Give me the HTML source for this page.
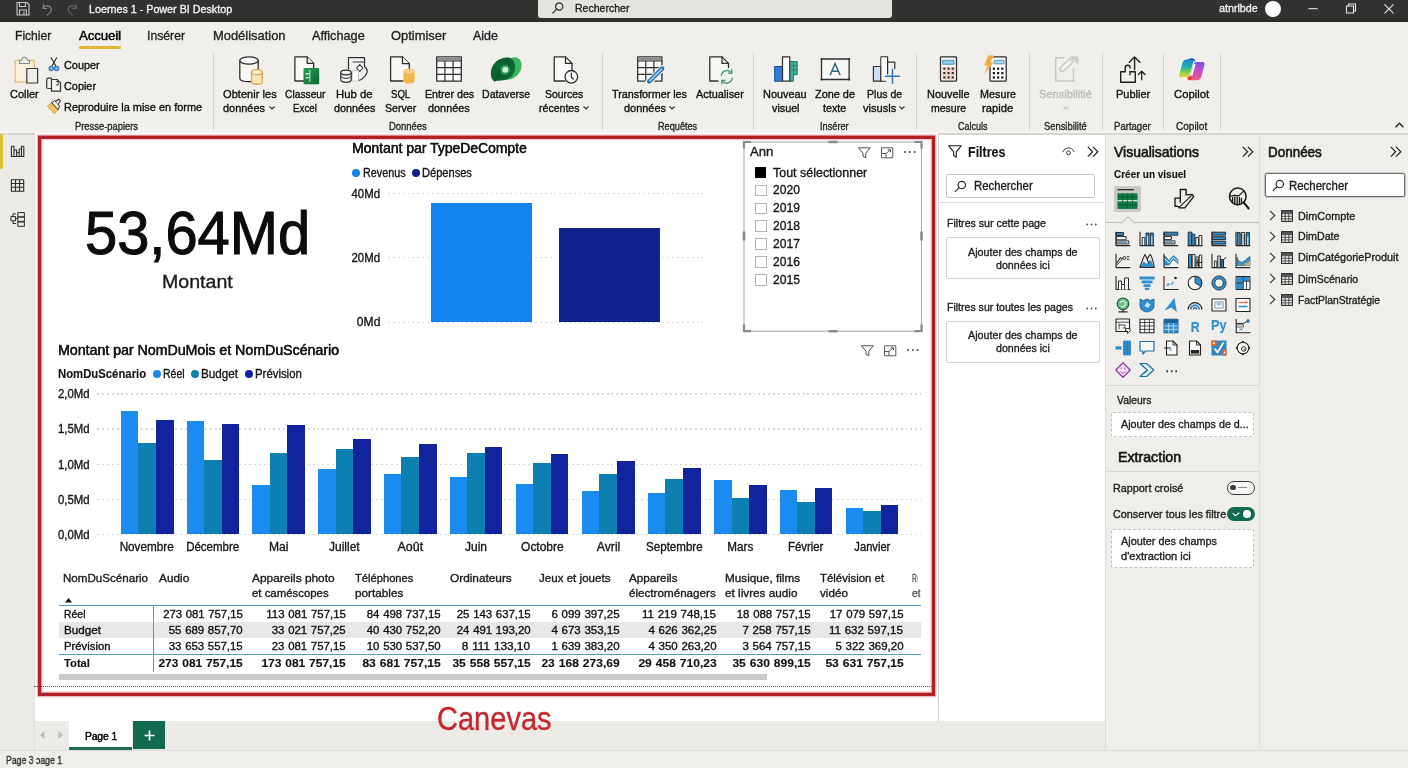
<!DOCTYPE html>
<html lang="fr">
<head>
<meta charset="utf-8">
<title>Loernes 1 - Power BI Desktop</title>
<style>
html,body{margin:0;padding:0}
body{width:1408px;height:768px;position:relative;overflow:hidden;background:#efeeea;font-family:"Liberation Sans",sans-serif;color:#1b1b1b;font-size:12px}
.a{position:absolute;white-space:nowrap;line-height:1;-webkit-text-stroke:0.34px}
.c{text-align:center}
.r{text-align:right}
.n{transform-origin:0 0;display:inline-block}
svg{position:absolute;overflow:visible}
</style>
</head>
<body>
<div id="root" style="position:absolute;left:0;top:0;width:1408px;height:768px;will-change:transform">
<!-- title bar -->
<div class="a" style="left:0;top:0;width:1408px;height:22px;background:linear-gradient(#333230 0,#333230 80%,#2b2a28 100%)"></div>
<svg style="left:14.300px;top:1.200px" width="63" height="16" viewBox="0 0 60 16" fill="none" stroke="#c8c8c6" stroke-width="1.1">
<path d="M1.5 1.5h10l2 2v10.500h-12z M4 1.500v4h6v-4 M4 14v-5h7v5 M8.500 10.500v3"/>
<path d="M28.500 3l-1.200 4.200 4.200 0.300 M27.600 7c2-2.500 5.500-2.700 7.300-0.800 1.800 2 1 5-3.400 8" stroke="#8a8a88"/>
<path d="M60 3l1.200 4.200-4.200 0.300 M60.900 7c-2-2.500-5.500-2.700-7.300-0.800-1.800 2-1 5 3.400 8" stroke="#6a6967"/>
</svg>
<div class="a" style="left:537.500px;top:0;width:354.500px;height:18px;background:#e3e2df;border-radius:0 0 3px 3px"></div>
<svg style="left:551px;top:1px" width="14" height="14" viewBox="0 0 14 14" fill="none" stroke="#2b2b2b" stroke-width="1.200"><circle cx="8.200" cy="5.500" r="3.600"/><path d="M5.600 8.200L1.500 12.300"/></svg>
<div class="a" style="left:1265px;top:0.700px;width:16px;height:16px;border-radius:8px;background:#fff"></div>
<svg style="left:1305px;top:0px" width="100" height="18" viewBox="0 0 100 18" fill="none" stroke="#e6e6e4" stroke-width="1.100">
<path d="M3.500 8.700h9.200"/>
<path d="M41.500 6h7v7h-7z M43.500 6v-2h7v7h-2" />
<path d="M79.500 4.300l9 9 M88.500 4.300l-9 9"/>
</svg>
<!-- tabs + ribbon background -->
<div class="a" style="left:0;top:22px;width:1408px;height:111px;background:#f0efeb"></div>
<div class="a" style="left:0;top:128.500px;width:1408px;height:4.500px;background:linear-gradient(#f0efeb,#f6f5f2)"></div>
<div class="a" style="left:0;top:133px;width:1408px;height:1.500px;background:#d6d5d1"></div>
<div class="a" style="left:79px;top:45.700px;width:42px;height:3px;background:#e2b93b;border-radius:1px"></div>
<!-- top text -->
<div class="a" style="left:89.3px;top:4px;font-size:11.4px;transform:scaleX(0.9418);transform-origin:0 0;color:#f4f4f2;">Loernes 1 - Power BI Desktop</div>
<div class="a" style="left:575px;top:3px;font-size:11.5px;transform:scaleX(0.9168);transform-origin:0 0;color:#222;">Rechercher</div>
<div class="a" style="left:1218.5px;top:3px;font-size:11px;transform:scaleX(0.9736);transform-origin:0 0;color:#f0f0ee;">atnrlbde</div>
<div class="a" style="left:15px;top:29px;font-size:13px;transform:scaleX(0.9305);transform-origin:0 0;color:#1f1f1f;">Fichier</div>
<div class="a" style="left:79px;top:29px;font-size:13px;transform:scaleX(1.0021);transform-origin:0 0;color:#111;text-shadow:0.35px 0 0 #111;">Accueil</div>
<div class="a" style="left:147px;top:29px;font-size:13px;transform:scaleX(0.9391);transform-origin:0 0;color:#1f1f1f;">Insérer</div>
<div class="a" style="left:212.5px;top:29px;font-size:13px;transform:scaleX(0.9933);transform-origin:0 0;color:#1f1f1f;">Modélisation</div>
<div class="a" style="left:311.8px;top:29px;font-size:13px;transform:scaleX(0.9765);transform-origin:0 0;color:#1f1f1f;">Affichage</div>
<div class="a" style="left:391.2px;top:29px;font-size:13px;transform:scaleX(0.9924);transform-origin:0 0;color:#1f1f1f;">Optimiser</div>
<div class="a" style="left:473px;top:29px;font-size:13px;transform:scaleX(0.9607);transform-origin:0 0;color:#1f1f1f;">Aide</div>
<div class="a" style="left:10px;top:89px;font-size:11.5px;transform:scaleX(0.9555);transform-origin:0 0;color:#0f0f0f;">Coller</div>
<div class="a" style="left:63.8px;top:60px;font-size:11.5px;transform:scaleX(0.9464);transform-origin:0 0;color:#0f0f0f;">Couper</div>
<div class="a" style="left:63.8px;top:81px;font-size:11.5px;transform:scaleX(0.9445);transform-origin:0 0;color:#0f0f0f;">Copier</div>
<div class="a" style="left:63.8px;top:102px;font-size:11.5px;transform:scaleX(0.9524);transform-origin:0 0;color:#0f0f0f;">Reproduire la mise en forme</div>
<div class="a" style="left:222.5px;top:89px;font-size:11.5px;transform:scaleX(0.9656);transform-origin:0 0;color:#0f0f0f;">Obtenir les</div>
<div class="a" style="left:223.3px;top:103px;font-size:11.5px;transform:scaleX(0.9518);transform-origin:0 0;color:#0f0f0f;">données</div>
<svg style="left:269px;top:106px" width="6" height="4" viewBox="0 0 6 4" fill="none" stroke="#333" stroke-width="1.2"><path d="M0.5 0.5L3 3L5.5 0.5"/></svg>
<div class="a" style="left:284.5px;top:89px;font-size:11.5px;transform:scaleX(0.8925);transform-origin:0 0;color:#0f0f0f;">Classeur</div>
<div class="a" style="left:293px;top:103px;font-size:11.5px;transform:scaleX(0.8535);transform-origin:0 0;color:#0f0f0f;">Excel</div>
<div class="a" style="left:336px;top:89px;font-size:11.5px;transform:scaleX(0.9842);transform-origin:0 0;color:#0f0f0f;">Hub de</div>
<div class="a" style="left:333.5px;top:103px;font-size:11.5px;transform:scaleX(0.9404);transform-origin:0 0;color:#0f0f0f;">données</div>
<div class="a" style="left:390.8px;top:89px;font-size:11.5px;transform:scaleX(0.8344);transform-origin:0 0;color:#0f0f0f;">SQL</div>
<div class="a" style="left:384.5px;top:103px;font-size:11.5px;transform:scaleX(0.9211);transform-origin:0 0;color:#0f0f0f;">Server</div>
<div class="a" style="left:424.5px;top:89px;font-size:11.5px;transform:scaleX(0.9273);transform-origin:0 0;color:#0f0f0f;">Entrer des</div>
<div class="a" style="left:428.2px;top:103px;font-size:11.5px;transform:scaleX(0.9450);transform-origin:0 0;color:#0f0f0f;">données</div>
<div class="a" style="left:482px;top:89px;font-size:11.5px;transform:scaleX(0.9196);transform-origin:0 0;color:#0f0f0f;">Dataverse</div>
<div class="a" style="left:545px;top:89px;font-size:11.5px;transform:scaleX(0.9054);transform-origin:0 0;color:#0f0f0f;">Sources</div>
<div class="a" style="left:539px;top:103px;font-size:11.5px;transform:scaleX(0.9181);transform-origin:0 0;color:#0f0f0f;">récentes</div>
<svg style="left:582.5px;top:106px" width="6" height="4" viewBox="0 0 6 4" fill="none" stroke="#333" stroke-width="1.2"><path d="M0.5 0.5L3 3L5.5 0.5"/></svg>
<div class="a" style="left:612px;top:89px;font-size:11.5px;transform:scaleX(0.9364);transform-origin:0 0;color:#0f0f0f;">Transformer les</div>
<div class="a" style="left:623.8px;top:103px;font-size:11.5px;transform:scaleX(0.9518);transform-origin:0 0;color:#0f0f0f;">données</div>
<svg style="left:669px;top:106px" width="6" height="4" viewBox="0 0 6 4" fill="none" stroke="#333" stroke-width="1.2"><path d="M0.5 0.5L3 3L5.5 0.5"/></svg>
<div class="a" style="left:695.7px;top:89px;font-size:11.5px;transform:scaleX(0.9466);transform-origin:0 0;color:#0f0f0f;">Actualiser</div>
<div class="a" style="left:763.2px;top:89px;font-size:11.5px;transform:scaleX(0.9492);transform-origin:0 0;color:#0f0f0f;">Nouveau</div>
<div class="a" style="left:771.5px;top:103px;font-size:11.5px;transform:scaleX(0.9353);transform-origin:0 0;color:#0f0f0f;">visuel</div>
<div class="a" style="left:814.8px;top:89px;font-size:11.5px;transform:scaleX(0.9478);transform-origin:0 0;color:#0f0f0f;">Zone de</div>
<div class="a" style="left:823.2px;top:103px;font-size:11.5px;transform:scaleX(0.9305);transform-origin:0 0;color:#0f0f0f;">texte</div>
<div class="a" style="left:867px;top:89px;font-size:11.5px;transform:scaleX(0.9176);transform-origin:0 0;color:#0f0f0f;">Plus de</div>
<div class="a" style="left:863.2px;top:103px;font-size:11.5px;transform:scaleX(0.9622);transform-origin:0 0;color:#0f0f0f;">visusls</div>
<svg style="left:898.5px;top:106px" width="6" height="4" viewBox="0 0 6 4" fill="none" stroke="#333" stroke-width="1.2"><path d="M0.5 0.5L3 3L5.5 0.5"/></svg>
<div class="a" style="left:927px;top:89px;font-size:11.5px;transform:scaleX(0.9497);transform-origin:0 0;color:#0f0f0f;">Nouvelle</div>
<div class="a" style="left:931px;top:103px;font-size:11.5px;transform:scaleX(0.9127);transform-origin:0 0;color:#0f0f0f;">mesure</div>
<div class="a" style="left:979.8px;top:89px;font-size:11.5px;transform:scaleX(0.9387);transform-origin:0 0;color:#0f0f0f;">Mesure</div>
<div class="a" style="left:982.2px;top:103px;font-size:11.5px;transform:scaleX(0.9759);transform-origin:0 0;color:#0f0f0f;">rapide</div>
<div class="a" style="left:1039px;top:89px;font-size:11.5px;transform:scaleX(0.9641);transform-origin:0 0;color:#b9b8b5;">Sensibilitié</div>
<svg style="left:1062.5px;top:106px" width="6" height="4" viewBox="0 0 6 4" fill="none" stroke="#c4c3c0" stroke-width="1.2"><path d="M0.5 0.5L3 3L5.5 0.5"/></svg>
<div class="a" style="left:1115.5px;top:89px;font-size:11.5px;transform:scaleX(0.9553);transform-origin:0 0;color:#0f0f0f;">Publier</div>
<div class="a" style="left:1174px;top:89px;font-size:11.5px;transform:scaleX(0.9833);transform-origin:0 0;color:#0f0f0f;">Copilot</div>
<div class="a" style="left:74.5px;top:121px;font-size:10.8px;transform:scaleX(0.8675);transform-origin:0 0;color:#262626;">Presse-papiers</div>
<div class="a" style="left:388.8px;top:121px;font-size:10.8px;transform:scaleX(0.8721);transform-origin:0 0;color:#262626;">Données</div>
<div class="a" style="left:658.2px;top:121px;font-size:10.8px;transform:scaleX(0.8480);transform-origin:0 0;color:#262626;">Requêtes</div>
<div class="a" style="left:820.2px;top:121px;font-size:10.8px;transform:scaleX(0.8539);transform-origin:0 0;color:#262626;">Insérer</div>
<div class="a" style="left:957.8px;top:121px;font-size:10.8px;transform:scaleX(0.8331);transform-origin:0 0;color:#262626;">Calculs</div>
<div class="a" style="left:1044px;top:121px;font-size:10.8px;transform:scaleX(0.8675);transform-origin:0 0;color:#262626;">Sensibilité</div>
<div class="a" style="left:1114.2px;top:121px;font-size:10.8px;transform:scaleX(0.8861);transform-origin:0 0;color:#262626;">Partager</div>
<div class="a" style="left:1176px;top:121px;font-size:10.8px;transform:scaleX(0.9282);transform-origin:0 0;color:#262626;">Copilot</div>
<div class="a" style="left:213px;top:53px;width:1px;height:77px;background:#d4d3d0;"></div>
<div class="a" style="left:602px;top:53px;width:1px;height:77px;background:#d4d3d0;"></div>
<div class="a" style="left:753px;top:53px;width:1px;height:77px;background:#d4d3d0;"></div>
<div class="a" style="left:916px;top:53px;width:1px;height:77px;background:#d4d3d0;"></div>
<div class="a" style="left:1029px;top:53px;width:1px;height:77px;background:#d4d3d0;"></div>
<div class="a" style="left:1102px;top:53px;width:1px;height:77px;background:#d4d3d0;"></div>
<div class="a" style="left:1163px;top:53px;width:1px;height:77px;background:#d4d3d0;"></div>
<div class="a" style="left:1220px;top:53px;width:1px;height:77px;background:#d4d3d0;"></div>
<svg style="left:1394.5px;top:122px" width="9" height="6" viewBox="0 0 9 6" fill="none" stroke="#222" stroke-width="1.3"><path d="M0.6 5.3L4.5 1.2L8.400 5.3"/></svg>
<!-- ribbon icons -->
<svg style="left:0;top:0" width="1408" height="134" viewBox="0 0 1408 134" fill="none" stroke-linejoin="round" stroke-linecap="round">
<defs>
<linearGradient id="gxl" x1="0" y1="0" x2="1" y2="1"><stop offset="0" stop-color="#2a9a55"/><stop offset="1" stop-color="#0c6a33"/></linearGradient>
<linearGradient id="gcpl" x1="0" y1="0" x2="0" y2="1"><stop offset="0" stop-color="#1b86d8"/><stop offset="0.45" stop-color="#27b3a8"/><stop offset="0.75" stop-color="#8fd440"/><stop offset="1" stop-color="#f3d13a"/></linearGradient>
<linearGradient id="gcpr" x1="0" y1="0" x2="0" y2="1"><stop offset="0" stop-color="#7d4fe0"/><stop offset="0.5" stop-color="#c24fc4"/><stop offset="1" stop-color="#f4568f"/></linearGradient>
<radialGradient id="gdv" cx="0.3" cy="0.4" r="0.8"><stop offset="0" stop-color="#0a6a33"/><stop offset="0.6" stop-color="#0b5b2c"/><stop offset="1" stop-color="#12803f"/></radialGradient>
</defs>
<!-- Coller -->
<path d="M19.5 60.500H15.200V82h10.500" stroke="#e3bf7c" stroke-width="1.400" fill="none"/>
<path d="M15.900 61.200H33.500V67.500H26.500V81.300H15.900z" fill="#f8efdc"/>
<path d="M29.500 60.500H34.200V67.500" stroke="#e3bf7c" stroke-width="1.400"/>
<path d="M19.500 63.500V60.300H21.800C21.800 56.300 27.200 56.300 27.200 60.300H29.500V63.500z" fill="#f0efeb" stroke="#8a8a8a" stroke-width="1.100"/>
<rect x="26.800" y="68.500" width="10.800" height="14.500" fill="#eeeeec" stroke="#3a3a3a" stroke-width="1.200"/>
<!-- Couper -->
<path d="M51.200 57.800L56 66.500M56.600 57.800L51.800 66.500" stroke="#333" stroke-width="1.200"/>
<circle cx="51.200" cy="68.500" r="2" stroke="#3f7fc4" stroke-width="1.500" fill="#9cc0e8"/>
<circle cx="56.600" cy="68.500" r="2" stroke="#3f7fc4" stroke-width="1.500" fill="#9cc0e8"/>
<!-- Copier -->
<path d="M50.500 88.500H48.200Q46.700 88.500 46.700 87V79.700Q46.700 78.200 48.200 78.200H51.500" stroke="#333" stroke-width="1.200"/>
<path d="M51.500 91.200V79.500H57.200L60.500 82.800V91.200z" fill="#f6f5f3" stroke="#333" stroke-width="1.200"/>
<path d="M56.200 81.500h2v3.500h-2" stroke="#333" stroke-width="0.900"/>
<!-- Reproduire -->
<path d="M47.500 106L52 102.500L58.200 109.500L54.500 113.500z" fill="#f2c45f" stroke="#d9a033" stroke-width="0.900"/>
<path d="M52 102.500L54.800 100.500L59.500 106.200L58.200 109.500z" fill="#f6f5f3" stroke="#333" stroke-width="1"/>
<path d="M55.500 101.500L58.800 99.200L60.300 100.800L58.200 104.200" stroke="#333" stroke-width="1.100" fill="#f6f5f3"/>
<!-- Obtenir les données -->
<path d="M239.800 60.500V78.200C239.800 82.800 258.200 82.800 258.200 78.200V60.500" fill="#f8f8f6" stroke="#2f2f2f" stroke-width="1.300"/>
<ellipse cx="249" cy="60.500" rx="9.200" ry="3.700" fill="#f8f8f6" stroke="#2f2f2f" stroke-width="1.300"/>
<path d="M251.500 72.200V82C251.500 85 262.300 85 262.300 82V72.200" fill="#fbe4b3" stroke="#dba858" stroke-width="1.300"/>
<ellipse cx="256.900" cy="72.200" rx="5.400" ry="2.500" fill="#fdeecb" stroke="#dba858" stroke-width="1.300"/>
<!-- Classeur Excel -->
<path d="M294.900 56.900H307.200L313.600 63.300V81H294.900z" fill="#f8f8f6" stroke="#2f2f2f" stroke-width="1.300"/>
<path d="M307.200 56.900V63.300H313.600" stroke="#2f2f2f" stroke-width="1.300" fill="#f8f8f6"/>
<rect x="303.500" y="68" width="15.700" height="16.200" rx="1" fill="url(#gxl)" stroke="none"/>
<path d="M309.800 70.500v11 M306 73.500h3.800 M306 77.500h3.800" stroke="#bfe6cc" stroke-width="1.100"/>
<rect x="306.200" y="73.500" width="1.600" height="1.600" fill="#e6f6ea" stroke="none"/><rect x="306.200" y="77" width="1.600" height="1.600" fill="#e6f6ea" stroke="none"/>
<!-- Hub de données -->
<path d="M348.500 69V57.600H364.500V66.500" stroke="#2f2f2f" stroke-width="1.200" fill="#f6f5f3"/>
<path d="M353 62H364.500" stroke="#2f2f2f" stroke-width="1"/>
<path d="M364.500 66.500Q368 69 367 72.500T361.500 79.500L358.500 80.500" stroke="#2f2f2f" stroke-width="1.200"/>
<path d="M359.800 64.500L363 68L359.800 71.500L356.600 68z" fill="#f6f5f3" stroke="#2f2f2f" stroke-width="1.100"/>
<rect x="352.500" y="70.500" width="6" height="10.500" fill="#fafafa" stroke="#bdbdbd" stroke-width="0.800"/>
<path d="M340.800 72.500V79.800C340.800 83.200 351.200 83.200 351.200 79.800V72.500" fill="#f6f5f3" stroke="#2f2f2f" stroke-width="1.200"/>
<ellipse cx="346" cy="72.500" rx="5.200" ry="2.300" fill="#f6f5f3" stroke="#2f2f2f" stroke-width="1.200"/>
<path d="M340.800 76.200C340.800 79.200 351.200 79.200 351.200 76.200" stroke="#2f2f2f" stroke-width="1"/>
<!-- SQL Server -->
<path d="M390.600 56.900H402.500L409.300 63.700V81H390.600z" fill="#f8f8f6" stroke="#2f2f2f" stroke-width="1.300"/>
<path d="M402.500 56.900V63.700H409.300" stroke="#2f2f2f" stroke-width="1.300" fill="#f8f8f6"/>
<path d="M403.600 71.500V81.200C403.600 84.200 414.400 84.200 414.400 81.200V71.500C414.400 68.300 403.600 68.300 403.600 71.500z" fill="#f3b54a" stroke="#f6cd85" stroke-width="0.900"/>
<ellipse cx="409" cy="71.500" rx="4.800" ry="2" fill="#f8d089" stroke="none"/>
<!-- Entrer des données -->
<rect x="436.700" y="56.900" width="24.600" height="24.200" fill="#fafaf8" stroke="#2f2f2f" stroke-width="1.300"/>
<rect x="437.300" y="57.500" width="23.400" height="3" fill="#8e8e8c" stroke="none"/>
<path d="M436.700 61H461.300M436.700 67.700H461.300M436.700 74.400H461.300M444.900 61V81M453.100 61V81" stroke="#2f2f2f" stroke-width="1.200"/>
<!-- Dataverse -->
<path d="M510.500 58.500C515 55.800 521 58 521.600 64.500C522.200 71.500 516.500 78.500 508.500 79.800C513.500 74.500 515.500 65 510.500 58.500z" fill="#3fb35f" stroke="none"/>
<path d="M511 58.300C517.500 62.500 516.500 73.500 509.500 78.500C504.500 81.300 497.500 80.200 494.500 81.300C490.500 79.800 489.800 72.500 492.300 66.800C495.500 59.800 504.500 55.800 511 58.300z" fill="url(#gdv)" stroke="none"/>
<path d="M494.500 81.300C497.800 77.800 497.500 73.500 500 70.200" stroke="#063f1e" stroke-width="1.600" opacity="0.450" fill="none"/>
<circle cx="505.300" cy="69.700" r="5.300" fill="#2c9a4f" stroke="#0d6a33" stroke-width="0.800"/>
<circle cx="505.300" cy="69.700" r="2.900" fill="#d6ecd9" stroke="none"/>
<!-- Sources récentes -->
<path d="M565 81H554.200V56.900H565.500L572 63.400V69.500" fill="#f8f8f6" stroke="#2f2f2f" stroke-width="1.300"/>
<path d="M565.500 56.900V63.400H572" stroke="#2f2f2f" stroke-width="1.300"/>
<circle cx="571.300" cy="76.800" r="6.300" fill="#f6f5f3" stroke="#2f2f2f" stroke-width="1.300"/>
<path d="M571.300 73V77L573.300 79" stroke="#2f2f2f" stroke-width="1.200"/>
<!-- Transformer les données -->
<rect x="637.700" y="56.900" width="24.200" height="24.200" fill="#fafaf8" stroke="#2f2f2f" stroke-width="1.300"/>
<rect x="638.300" y="57.500" width="23" height="3" fill="#8e8e8c" stroke="none"/>
<path d="M637.700 61H661.900M637.700 67.700H661.900M637.700 74.400H661.900M645.800 61V81M653.900 61V81" stroke="#2f2f2f" stroke-width="1.200"/>
<path d="M647.500 83.500L662.500 68.500" stroke="#f0efeb" stroke-width="6.500"/>
<path d="M649.200 81.500L662.300 68.500" stroke="#1e6fa8" stroke-width="4.200"/>
<path d="M649.800 80.900L661.700 69.100" stroke="#9fd0f0" stroke-width="1.600"/>
<!-- Actualiser -->
<path d="M718 81H709.800V56.900H722L728.500 63.400V67.500" fill="#f8f8f6" stroke="#2f2f2f" stroke-width="1.300"/>
<path d="M722 56.900V63.400H728.500" stroke="#2f2f2f" stroke-width="1.300"/>
<path d="M721.300 75.500A5.700 5.700 0 0 1 731.500 72.800 M732.300 78.200A5.700 5.700 0 0 1 722.100 80.900" stroke="#4f9e73" stroke-width="1.400"/>
<path d="M731.800 69.800V73.200H728.500 M721.800 83.800V80.500H725" stroke="#4f9e73" stroke-width="1.400"/>
<!-- Nouveau visuel -->
<path d="M789.800 61.600H797.200V74.600H793.500V81.200H789.800z" fill="#3db39c" stroke="#1e7a6a" stroke-width="1"/>
<path d="M791.500 65.500H797 M791.500 70H797 M793.500 61.600V74.600" stroke="#1e7a6a" stroke-width="0.700"/>
<rect x="774.700" y="66.500" width="7.800" height="14.700" fill="#2f7fd6" stroke="#1b4f94" stroke-width="1.100"/>
<rect x="782.500" y="56.900" width="7.300" height="24.300" fill="#fafaf8" stroke="#2f2f2f" stroke-width="1.200"/>
<!-- Zone de texte -->
<rect x="821.500" y="59" width="27.600" height="20.500" fill="#f8f8f6" stroke="#2f2f2f" stroke-width="1.300"/>
<circle cx="821.500" cy="59" r="1.100" fill="#2f2f2f"/><circle cx="849.100" cy="59" r="1.100" fill="#2f2f2f"/><circle cx="821.500" cy="79.500" r="1.100" fill="#2f2f2f"/><circle cx="849.100" cy="79.500" r="1.100" fill="#2f2f2f"/>
<path d="M830.300 74.800L835.100 63.500L839.900 74.800M831.900 71.200H838.300" stroke="#2b5f7d" stroke-width="1.400" stroke-linejoin="miter"/>
<!-- Plus de visuels -->
<rect x="873.400" y="66.500" width="7.500" height="14.700" fill="#c9e0f1" stroke="#2f2f2f" stroke-width="1.200"/>
<path d="M887.600 74V56.900H880.900V81.200H885.500" fill="none" stroke="#2f2f2f" stroke-width="1.200"/>
<rect x="881.500" y="57.500" width="5.500" height="23" fill="#fafaf8" stroke="none"/>
<path d="M887.600 62.200H894.800V68.500" stroke="#2f2f2f" stroke-width="1.200"/>
<path d="M892.500 69.200V83.300M885.500 76.300H899.500" stroke="#2e75b6" stroke-width="1.500"/>
<!-- Nouvelle mesure -->
<rect x="940.500" y="56.900" width="16" height="24.300" rx="0.800" fill="#fafaf8" stroke="#2f2f2f" stroke-width="1.300"/>
<rect x="943" y="60.300" width="11" height="4" fill="#8fd0ee" stroke="#2f7fb0" stroke-width="0.800"/>
<rect x="942.300" y="66.800" width="12.400" height="12.800" fill="#f5d5cc" stroke="none"/>
<g fill="#2b2b2b" stroke="none"><rect x="943.300" y="67.600" width="2.100" height="2.100"/><rect x="947.500" y="67.600" width="2.100" height="2.100"/><rect x="951.700" y="67.600" width="2.100" height="2.100"/><rect x="943.300" y="72" width="2.100" height="2.100"/><rect x="947.500" y="72" width="2.100" height="2.100"/><rect x="951.700" y="72" width="2.100" height="2.100"/><rect x="943.300" y="76.400" width="2.100" height="2.100"/><rect x="947.500" y="76.400" width="2.100" height="2.100"/><rect x="951.700" y="76.400" width="2.100" height="2.100"/></g>
<!-- Mesure rapide -->
<rect x="990" y="56.900" width="16.200" height="24.300" rx="0.800" fill="#fafaf8" stroke="#2f2f2f" stroke-width="1.300"/>
<rect x="994.500" y="60.300" width="9.500" height="3.600" fill="#a9d8ef" stroke="#2f7fb0" stroke-width="0.700"/>
<g fill="#1d1d1d" stroke="none"><rect x="992.800" y="67.600" width="2.200" height="2.200"/><rect x="997" y="67.600" width="2.200" height="2.200"/><rect x="1001.200" y="67.600" width="2.200" height="2.200"/><rect x="992.800" y="72" width="2.200" height="2.200"/><rect x="997" y="72" width="2.200" height="2.200"/><rect x="1001.200" y="72" width="2.200" height="2.200"/><rect x="992.800" y="76.400" width="2.200" height="2.200"/><rect x="997" y="76.400" width="2.200" height="2.200"/><rect x="1001.200" y="76.400" width="2.200" height="2.200"/></g>
<path d="M988.500 55.600H993.800L990.300 62.300H993.300L984.800 73.800L987.600 65.300H984.600z" fill="#f3a83c" stroke="#f6c77c" stroke-width="0.700"/>
<!-- Sensibilité -->
<path d="M1064 57.700H1055.700V81H1073.500V69" stroke="#c8c7c4" stroke-width="1.400"/>
<path d="M1060.500 67.500L1069.500 58.500L1073 62L1064.500 70.500Q1062 72.500 1060.200 70.500T1060.500 67.500z" stroke="#c8c7c4" stroke-width="1.400"/>
<path d="M1071 57H1077.800V63.800z" fill="#cfcecb" stroke="#c8c7c4" stroke-width="1"/>
<!-- Publier -->
<path d="M1130 71.700H1135.300V82.200H1120.700V71.700H1125.200V68Q1125.200 65.300 1127.800 65.300T1130 68" stroke="#1f1f1f" stroke-width="1.400" fill="none"/>
<path d="M1130 71.700V74.800" stroke="#1f1f1f" stroke-width="1.400"/>
<path d="M1134.600 69.500V56.900M1129.300 62.200L1134.600 56.900L1139.900 62.200" stroke="#1f1f1f" stroke-width="1.400"/>
<path d="M1141.700 79.800V71.200M1138.400 74.500L1141.700 71.200L1145 74.500" stroke="#1f1f1f" stroke-width="1.300"/>
<!-- Copilot -->
<g stroke="none">
<path d="M1194.500 59.500Q1192.800 57.600 1190.200 58.600L1187 60H1192.500Q1194.500 60.500 1195.800 63.500z" fill="#1d3fa8"/>
<path d="M1186.500 59.600H1192.200Q1194 59.600 1193.400 61.600L1189.600 75.200Q1188.900 77.300 1186.800 77.300H1181.200Q1178.600 77.300 1179.300 74.700L1182.600 62.600Q1183.500 59.600 1186.500 59.600z" fill="url(#gcpl)"/>
<path d="M1197.400 62H1202.400Q1205.200 62 1204.500 64.800L1201.300 76.800Q1200.300 80.300 1196.900 80.300H1190.600Q1189 80.300 1189.500 78.600L1193.400 64.800Q1194.200 62 1197.400 62z" fill="url(#gcpr)"/>
<path d="M1188 76.500H1191.800L1190.800 80.300H1189.500Q1187.300 80.300 1187.600 78.200z" fill="#d8412a"/>
<path d="M1193.800 63.800L1195.600 64.200L1192.400 75.700L1190.400 75.700z" fill="#fff7e8"/>
</g>
</svg>
<!-- canvas -->
<div class="a" style="left:0px;top:134.5px;width:34px;height:615.5px;background:#ebeae6;"></div>
<div class="a" style="left:33.5px;top:134.5px;width:1px;height:615.5px;background:#e0dfdb;"></div>
<div class="a" style="left:0px;top:134px;width:3px;height:35px;background:#d8c22c;border-radius:0 2px 2px 0;"></div>
<div class="a" style="left:34.5px;top:133px;width:903.5px;height:588px;background:#ffffff;"></div>
<div class="a" style="left:34.5px;top:721px;width:904px;height:29px;background:#ecebe8;"></div>
<svg style="left:0;top:0" width="940" height="700" viewBox="0 0 940 700" fill="none"><rect x="39.600" y="137.300" width="893.900" height="557.100" stroke="#e0585d" stroke-width="6.200" opacity="0.280"/><rect x="39.600" y="137.300" width="893.900" height="557.100" stroke="#b41f25" stroke-width="3.400"/></svg>
<div class="a" style="left:34px;top:685.8px;width:900px;height:0;border-top:1.300px dotted #555"></div>
<div class="a" style="left:84.8px;top:202px;font-size:62px;transform:scaleX(0.9333);transform-origin:0 0;color:#0c0c0c;-webkit-text-stroke:1.1px #0c0c0c;">53,64Md</div>
<div class="a" style="left:162.3px;top:272px;font-size:19px;transform:scaleX(1.0313);transform-origin:0 0;color:#1a1a1a;">Montant</div>
<div class="a" style="left:351.9px;top:141px;font-size:14.8px;transform:scaleX(0.9411);transform-origin:0 0;color:#161616;text-shadow:0.3px 0 0 #161616;">Montant par TypeDeCompte</div>
<div class="a" style="left:352.2px;top:169px;width:8px;height:8px;background:#1184ef;border-radius:50%;"></div>
<div class="a" style="left:363.4px;top:167px;font-size:12px;transform:scaleX(0.8995);transform-origin:0 0;color:#161616;">Revenus</div>
<div class="a" style="left:411.8px;top:169px;width:8px;height:8px;background:#10218b;border-radius:50%;"></div>
<div class="a" style="left:422.2px;top:167px;font-size:12px;transform:scaleX(0.9235);transform-origin:0 0;color:#161616;">Dépenses</div>
<div class="a" style="left:350.48px;top:188px;font-size:12px;transform:scaleX(0.9528);transform-origin:100% 0;color:#161616;">40Md</div>
<div class="a" style="left:388px;top:193.3px;width:315px;height:1.200px;background:repeating-linear-gradient(90deg,#dadada 0,#dadada 1.900px,transparent 1.900px,transparent 4.900px)"></div>
<div class="a" style="left:350.48px;top:252px;font-size:12px;transform:scaleX(0.9528);transform-origin:100% 0;color:#161616;">20Md</div>
<div class="a" style="left:388px;top:256.8px;width:315px;height:1.200px;background:repeating-linear-gradient(90deg,#dadada 0,#dadada 1.900px,transparent 1.900px,transparent 4.900px)"></div>
<div class="a" style="left:357.16px;top:316px;font-size:12px;transform:scaleX(1.0067);transform-origin:100% 0;color:#161616;">0Md</div>
<div class="a" style="left:388px;top:321.6px;width:315px;height:1.200px;background:repeating-linear-gradient(90deg,#dadada 0,#dadada 1.900px,transparent 1.900px,transparent 4.900px)"></div>
<div class="a" style="left:430.8px;top:203.3px;width:100.9px;height:118.9px;background:#1184ef;"></div>
<div class="a" style="left:559.4px;top:227.6px;width:101px;height:94.6px;background:#10218b;"></div>
<svg style="left:740px;top:138px" width="186" height="198" viewBox="740 138 186 198" fill="none"><rect x="744" y="142" width="177.500" height="189.200" stroke="#adadad" stroke-width="1.100"/></svg>
<svg style="left:740px;top:138px" width="186" height="198" viewBox="740 138 186 198" fill="none" stroke="#8a8a8a" stroke-width="2.2"><path d="M744 148.500V142H751 M914.500 142H921.500V148.500 M744 324.500V331.200H751 M914.500 331.200H921.500V324.500"/><path d="M828.500 142H837.500 M828.500 331.200H837.500 M744 231.500V240.500 M921.500 231.500V240.500" stroke-width="2.600"/></svg>
<div class="a" style="left:749.9px;top:145px;font-size:13.2px;transform:scaleX(0.9964);transform-origin:0 0;color:#161616;">Ann</div>
<svg style="left:857.7px;top:147px" width="60" height="12" viewBox="0 0 60 12" fill="none" stroke="#4a4a4a" stroke-width="1"><path d="M0.500 0.800H12.300L7.800 6.200V10.800L5 9.300V6.200z"/><path d="M23.500 0.800H34.800V10.800H23.500z M28 6.500L32.500 2.800M29.800 2.800H32.500V5.300 M23.500 6.500H28V10.800" stroke-width="0.900"/><g fill="#4a4a4a" stroke="none"><circle cx="47" cy="5" r="1"/><circle cx="51.800" cy="5" r="1"/><circle cx="56.600" cy="5" r="1"/></g></svg>
<div class="a" style="left:754.6px;top:167px;width:11.2px;height:10.8px;background:#000;"></div>
<div class="a" style="left:773.3px;top:167px;font-size:12.5px;transform:scaleX(0.9969);transform-origin:0 0;color:#161616;">Tout sélectionner</div>
<div class="a" style="left:755.2px;top:184.6px;width:9.800px;height:9.800px;border:1px solid #b5b5b5;background:#fff"></div>
<div class="a" style="left:773.3px;top:184px;font-size:12.5px;transform:scaleX(0.9675);transform-origin:0 0;color:#161616;">2020</div>
<div class="a" style="left:755.2px;top:202.52px;width:9.800px;height:9.800px;border:1px solid #b5b5b5;background:#fff"></div>
<div class="a" style="left:773.3px;top:202px;font-size:12.5px;transform:scaleX(0.9675);transform-origin:0 0;color:#161616;">2019</div>
<div class="a" style="left:755.2px;top:220.44px;width:9.800px;height:9.800px;border:1px solid #b5b5b5;background:#fff"></div>
<div class="a" style="left:773.3px;top:220px;font-size:12.5px;transform:scaleX(0.9675);transform-origin:0 0;color:#161616;">2018</div>
<div class="a" style="left:755.2px;top:238.36px;width:9.800px;height:9.800px;border:1px solid #b5b5b5;background:#fff"></div>
<div class="a" style="left:773.3px;top:238px;font-size:12.5px;transform:scaleX(0.9675);transform-origin:0 0;color:#161616;">2017</div>
<div class="a" style="left:755.2px;top:256.28px;width:9.800px;height:9.800px;border:1px solid #b5b5b5;background:#fff"></div>
<div class="a" style="left:773.3px;top:256px;font-size:12.5px;transform:scaleX(0.9675);transform-origin:0 0;color:#161616;">2016</div>
<div class="a" style="left:755.2px;top:274.2px;width:9.800px;height:9.800px;border:1px solid #b5b5b5;background:#fff"></div>
<div class="a" style="left:773.3px;top:274px;font-size:12.5px;transform:scaleX(0.9675);transform-origin:0 0;color:#161616;">2015</div>
<svg style="left:860.7px;top:345px" width="60" height="12" viewBox="0 0 60 12" fill="none" stroke="#4a4a4a" stroke-width="1"><path d="M0.500 0.800H12.300L7.800 6.200V10.800L5 9.300V6.200z"/><path d="M23.500 0.800H34.800V10.800H23.500z M28 6.500L32.500 2.800M29.800 2.800H32.500V5.300 M23.500 6.500H28V10.800" stroke-width="0.900"/><g fill="#4a4a4a" stroke="none"><circle cx="47" cy="5" r="1"/><circle cx="51.800" cy="5" r="1"/><circle cx="56.600" cy="5" r="1"/></g></svg>
<div class="a" style="left:57.7px;top:343px;font-size:14.8px;transform:scaleX(0.9570);transform-origin:0 0;color:#161616;text-shadow:0.3px 0 0 #161616;">Montant par NomDuMois et NomDuScénario</div>
<div class="a" style="left:57.7px;top:368px;font-size:12px;transform:scaleX(0.9437);transform-origin:0 0;color:#161616;font-weight:bold;-webkit-text-stroke:0.12px;">NomDuScénario</div>
<div class="a" style="left:152.8px;top:370px;width:8px;height:8px;background:#1a8cf0;border-radius:50%;"></div>
<div class="a" style="left:162.8px;top:368px;font-size:12px;transform:scaleX(0.8793);transform-origin:0 0;color:#161616;">Réel</div>
<div class="a" style="left:190.6px;top:370px;width:8px;height:8px;background:#0d7fb0;border-radius:50%;"></div>
<div class="a" style="left:200.9px;top:368px;font-size:12px;transform:scaleX(0.9728);transform-origin:0 0;color:#161616;">Budget</div>
<div class="a" style="left:244.6px;top:370px;width:8px;height:8px;background:#12239e;border-radius:50%;"></div>
<div class="a" style="left:254.6px;top:368px;font-size:12px;transform:scaleX(0.9483);transform-origin:0 0;color:#161616;">Prévision</div>
<div class="a" style="left:57.7px;top:388px;font-size:12px;transform:scaleX(0.9505);transform-origin:0 0;color:#161616;">2,0Md</div>
<div class="a" style="left:97px;top:393.4px;width:824px;height:1.200px;background:repeating-linear-gradient(90deg,#dadada 0,#dadada 1.900px,transparent 1.900px,transparent 4.900px)"></div>
<div class="a" style="left:57.7px;top:423px;font-size:12px;transform:scaleX(0.9505);transform-origin:0 0;color:#161616;">1,5Md</div>
<div class="a" style="left:97px;top:428.4px;width:824px;height:1.200px;background:repeating-linear-gradient(90deg,#dadada 0,#dadada 1.900px,transparent 1.900px,transparent 4.900px)"></div>
<div class="a" style="left:57.7px;top:459px;font-size:12px;transform:scaleX(0.9505);transform-origin:0 0;color:#161616;">1,0Md</div>
<div class="a" style="left:97px;top:463.9px;width:824px;height:1.200px;background:repeating-linear-gradient(90deg,#dadada 0,#dadada 1.900px,transparent 1.900px,transparent 4.900px)"></div>
<div class="a" style="left:57.7px;top:494px;font-size:12px;transform:scaleX(0.9505);transform-origin:0 0;color:#161616;">0,5Md</div>
<div class="a" style="left:97px;top:499px;width:824px;height:1.200px;background:repeating-linear-gradient(90deg,#dadada 0,#dadada 1.900px,transparent 1.900px,transparent 4.900px)"></div>
<div class="a" style="left:57.7px;top:529px;font-size:12px;transform:scaleX(0.9505);transform-origin:0 0;color:#161616;">0,0Md</div>
<div class="a" style="left:97px;top:534px;width:824px;height:1.200px;background:repeating-linear-gradient(90deg,#dadada 0,#dadada 1.900px,transparent 1.900px,transparent 4.900px)"></div>
<div class="a" style="left:120.8px;top:411.4px;width:17.62px;height:122.9px;background:#1a8cf0;"></div>
<div class="a" style="left:138.37px;top:442.5px;width:17.62px;height:91.8px;background:#0d7fb0;"></div>
<div class="a" style="left:155.94px;top:419.5px;width:17.57px;height:114.8px;background:#12239e;"></div>
<div class="a" style="left:119.48px;top:541px;font-size:12px;transform:scaleX(0.9774);transform-origin:50% 0;color:#161616;">Novembre</div>
<div class="a" style="left:186.5px;top:421.1px;width:17.62px;height:113.2px;background:#1a8cf0;"></div>
<div class="a" style="left:204.07px;top:459.8px;width:17.62px;height:74.5px;background:#0d7fb0;"></div>
<div class="a" style="left:221.64px;top:424.1px;width:17.57px;height:110.2px;background:#12239e;"></div>
<div class="a" style="left:185.18px;top:541px;font-size:12px;transform:scaleX(0.9575);transform-origin:50% 0;color:#161616;">Décembre</div>
<div class="a" style="left:252.3px;top:484.5px;width:17.62px;height:49.8px;background:#1a8cf0;"></div>
<div class="a" style="left:269.87px;top:453.2px;width:17.62px;height:81.1px;background:#0d7fb0;"></div>
<div class="a" style="left:287.44px;top:424.5px;width:17.57px;height:109.8px;background:#12239e;"></div>
<div class="a" style="left:268.99px;top:541px;font-size:12px;transform:scaleX(1.0085);transform-origin:50% 0;color:#161616;">Mai</div>
<div class="a" style="left:318px;top:468.9px;width:17.62px;height:65.4px;background:#1a8cf0;"></div>
<div class="a" style="left:335.57px;top:448.5px;width:17.62px;height:85.8px;background:#0d7fb0;"></div>
<div class="a" style="left:353.14px;top:438.8px;width:17.57px;height:95.5px;background:#12239e;"></div>
<div class="a" style="left:329.02px;top:541px;font-size:12px;transform:scaleX(0.9941);transform-origin:50% 0;color:#161616;">Juillet</div>
<div class="a" style="left:383.8px;top:474.2px;width:17.62px;height:60.1px;background:#1a8cf0;"></div>
<div class="a" style="left:401.37px;top:457.2px;width:17.62px;height:77.1px;background:#0d7fb0;"></div>
<div class="a" style="left:418.94px;top:443.5px;width:17.57px;height:90.8px;background:#12239e;"></div>
<div class="a" style="left:397.81px;top:541px;font-size:12px;transform:scaleX(1.0330);transform-origin:50% 0;color:#161616;">Août</div>
<div class="a" style="left:449.6px;top:476.9px;width:17.62px;height:57.4px;background:#1a8cf0;"></div>
<div class="a" style="left:467.17px;top:453.2px;width:17.62px;height:81.1px;background:#0d7fb0;"></div>
<div class="a" style="left:484.74px;top:446.8px;width:17.57px;height:87.5px;background:#12239e;"></div>
<div class="a" style="left:464.95px;top:541px;font-size:12px;transform:scaleX(0.9994);transform-origin:50% 0;color:#161616;">Juin</div>
<div class="a" style="left:515.7px;top:484.2px;width:17.62px;height:50.1px;background:#1a8cf0;"></div>
<div class="a" style="left:533.27px;top:462.5px;width:17.62px;height:71.8px;background:#0d7fb0;"></div>
<div class="a" style="left:550.84px;top:453.8px;width:17.57px;height:80.5px;background:#12239e;"></div>
<div class="a" style="left:520.71px;top:541px;font-size:12px;transform:scaleX(0.9957);transform-origin:50% 0;color:#161616;">Octobre</div>
<div class="a" style="left:581.8px;top:491.2px;width:17.62px;height:43.1px;background:#1a8cf0;"></div>
<div class="a" style="left:599.37px;top:474.2px;width:17.62px;height:60.1px;background:#0d7fb0;"></div>
<div class="a" style="left:616.94px;top:461.2px;width:17.57px;height:73.1px;background:#12239e;"></div>
<div class="a" style="left:596.6px;top:541px;font-size:12px;transform:scaleX(1.0166);transform-origin:50% 0;color:#161616;">Avril</div>
<div class="a" style="left:647.9px;top:492.5px;width:17.62px;height:41.8px;background:#1a8cf0;"></div>
<div class="a" style="left:665.47px;top:479.2px;width:17.62px;height:55.1px;background:#0d7fb0;"></div>
<div class="a" style="left:683.04px;top:468.2px;width:17.57px;height:66.1px;background:#12239e;"></div>
<div class="a" style="left:644.91px;top:541px;font-size:12px;transform:scaleX(0.9625);transform-origin:50% 0;color:#161616;">Septembre</div>
<div class="a" style="left:714px;top:479.5px;width:17.62px;height:54.8px;background:#1a8cf0;"></div>
<div class="a" style="left:731.57px;top:497.6px;width:17.62px;height:36.7px;background:#0d7fb0;"></div>
<div class="a" style="left:749.14px;top:484.5px;width:17.57px;height:49.8px;background:#12239e;"></div>
<div class="a" style="left:727.02px;top:541px;font-size:12px;transform:scaleX(0.9750);transform-origin:50% 0;color:#161616;">Mars</div>
<div class="a" style="left:779.7px;top:490.2px;width:17.62px;height:44.1px;background:#1a8cf0;"></div>
<div class="a" style="left:797.27px;top:501.6px;width:17.62px;height:32.7px;background:#0d7fb0;"></div>
<div class="a" style="left:814.84px;top:487.9px;width:17.57px;height:46.4px;background:#12239e;"></div>
<div class="a" style="left:787.39px;top:541px;font-size:12px;transform:scaleX(0.9508);transform-origin:50% 0;color:#161616;">Février</div>
<div class="a" style="left:845.5px;top:507.6px;width:17.62px;height:26.7px;background:#1a8cf0;"></div>
<div class="a" style="left:863.07px;top:510.6px;width:17.62px;height:23.7px;background:#0d7fb0;"></div>
<div class="a" style="left:880.64px;top:505.2px;width:17.57px;height:29.1px;background:#12239e;"></div>
<div class="a" style="left:852.51px;top:541px;font-size:12px;transform:scaleX(0.9306);transform-origin:50% 0;color:#161616;">Janvier</div>
<div class="a" style="left:63.4px;top:573px;font-size:10.9px;transform:scaleX(1.0644);transform-origin:0 0;color:#1c1c1c;">NomDuScénario</div>
<div class="a" style="left:159.2px;top:573px;font-size:10.9px;transform:scaleX(1.0871);transform-origin:0 0;color:#1c1c1c;">Audio</div>
<div class="a" style="left:252px;top:573px;font-size:10.9px;transform:scaleX(1.0920);transform-origin:0 0;color:#1c1c1c;">Appareils photo</div>
<div class="a" style="left:252px;top:588px;font-size:10.9px;transform:scaleX(1.0465);transform-origin:0 0;color:#1c1c1c;">et caméscopes</div>
<div class="a" style="left:355.4px;top:573px;font-size:10.9px;transform:scaleX(1.0254);transform-origin:0 0;color:#1c1c1c;">Téléphones</div>
<div class="a" style="left:355.4px;top:588px;font-size:10.9px;transform:scaleX(1.0796);transform-origin:0 0;color:#1c1c1c;">portables</div>
<div class="a" style="left:449.9px;top:573px;font-size:10.9px;transform:scaleX(1.0854);transform-origin:0 0;color:#1c1c1c;">Ordinateurs</div>
<div class="a" style="left:539.4px;top:573px;font-size:10.9px;transform:scaleX(1.0633);transform-origin:0 0;color:#1c1c1c;">Jeux et jouets</div>
<div class="a" style="left:628.5px;top:573px;font-size:10.9px;transform:scaleX(1.0675);transform-origin:0 0;color:#1c1c1c;">Appareils</div>
<div class="a" style="left:628.5px;top:588px;font-size:10.9px;transform:scaleX(1.0694);transform-origin:0 0;color:#1c1c1c;">électroménagers</div>
<div class="a" style="left:725.3px;top:573px;font-size:10.9px;transform:scaleX(1.0783);transform-origin:0 0;color:#1c1c1c;">Musique, films</div>
<div class="a" style="left:725.3px;top:588px;font-size:10.9px;transform:scaleX(1.0783);transform-origin:0 0;color:#1c1c1c;">et livres audio</div>
<div class="a" style="left:819.8px;top:573px;font-size:10.9px;transform:scaleX(1.0478);transform-origin:0 0;color:#1c1c1c;">Télévision et</div>
<div class="a" style="left:819.8px;top:588px;font-size:10.9px;transform:scaleX(1.0747);transform-origin:0 0;color:#1c1c1c;">vidéo</div>
<div class="a" style="left:912.3px;top:573px;font-size:10.9px;transform:scaleX(0.6101);transform-origin:0 0;color:#555;overflow:hidden;width:8.5px;">Ré</div>
<div class="a" style="left:912.3px;top:588px;font-size:10.9px;transform:scaleX(0.9353);transform-origin:0 0;color:#555;overflow:hidden;width:8.5px;">et</div>
<svg style="left:64.800px;top:597.500px" width="7" height="4.500" viewBox="0 0 7 4.500"><path d="M0 4.500L3.500 0L7 4.500z" fill="#111"/></svg>
<div class="a" style="left:59.4px;top:621.8px;width:862px;height:16.4px;background:#e7e7e7;"></div>
<div class="a" style="left:59.4px;top:605px;width:862px;height:1.1px;background:#4f9cc6;"></div>
<div class="a" style="left:59.4px;top:654px;width:862px;height:1.1px;background:#4f9cc6;"></div>
<div class="a" style="left:153.1px;top:605px;width:1.1px;height:66.5px;background:#4f9cc6;"></div>
<div class="a" style="left:63.9px;top:609px;font-size:10.9px;transform:scaleX(0.9592);transform-origin:0 0;color:#111;">Réel</div>
<div class="a" style="left:166.15px;top:609px;font-size:10.9px;transform:scaleX(1.0372);transform-origin:100% 0;color:#111;word-spacing:0.5px;">273 081 757,15</div>
<div class="a" style="left:269.76px;top:609px;font-size:10.9px;transform:scaleX(1.0482);transform-origin:100% 0;color:#111;word-spacing:0.5px;">113 081 757,15</div>
<div class="a" style="left:370.11px;top:609px;font-size:10.9px;transform:scaleX(1.0456);transform-origin:100% 0;color:#111;word-spacing:0.5px;">84 498 737,15</div>
<div class="a" style="left:459.71px;top:609px;font-size:10.9px;transform:scaleX(1.0456);transform-origin:100% 0;color:#111;word-spacing:0.5px;">25 143 637,15</div>
<div class="a" style="left:554.87px;top:609px;font-size:10.9px;transform:scaleX(1.0557);transform-origin:100% 0;color:#111;word-spacing:0.5px;">6 099 397,25</div>
<div class="a" style="left:646.42px;top:609px;font-size:10.9px;transform:scaleX(1.0577);transform-origin:100% 0;color:#111;word-spacing:0.5px;">11 219 748,15</div>
<div class="a" style="left:740.11px;top:609px;font-size:10.9px;transform:scaleX(1.0456);transform-origin:100% 0;color:#111;word-spacing:0.5px;">18 088 757,15</div>
<div class="a" style="left:832.51px;top:609px;font-size:10.9px;transform:scaleX(1.0456);transform-origin:100% 0;color:#111;word-spacing:0.5px;">17 079 597,15</div>
<div class="a" style="left:63.9px;top:625px;font-size:10.9px;transform:scaleX(1.0713);transform-origin:0 0;color:#111;">Budget</div>
<div class="a" style="left:172.21px;top:625px;font-size:10.9px;transform:scaleX(1.0456);transform-origin:100% 0;color:#111;word-spacing:0.5px;">55 689 857,70</div>
<div class="a" style="left:275.01px;top:625px;font-size:10.9px;transform:scaleX(1.0456);transform-origin:100% 0;color:#111;word-spacing:0.5px;">33 021 757,25</div>
<div class="a" style="left:370.11px;top:625px;font-size:10.9px;transform:scaleX(1.0456);transform-origin:100% 0;color:#111;word-spacing:0.5px;">40 430 752,20</div>
<div class="a" style="left:459.71px;top:625px;font-size:10.9px;transform:scaleX(1.0456);transform-origin:100% 0;color:#111;word-spacing:0.5px;">24 491 193,20</div>
<div class="a" style="left:554.87px;top:625px;font-size:10.9px;transform:scaleX(1.0557);transform-origin:100% 0;color:#111;word-spacing:0.5px;">4 673 353,15</div>
<div class="a" style="left:651.67px;top:625px;font-size:10.9px;transform:scaleX(1.0557);transform-origin:100% 0;color:#111;word-spacing:0.5px;">4 626 362,25</div>
<div class="a" style="left:746.17px;top:625px;font-size:10.9px;transform:scaleX(1.0557);transform-origin:100% 0;color:#111;word-spacing:0.5px;">7 258 757,15</div>
<div class="a" style="left:833.32px;top:625px;font-size:10.9px;transform:scaleX(1.0577);transform-origin:100% 0;color:#111;word-spacing:0.5px;">11 632 597,15</div>
<div class="a" style="left:63.9px;top:641px;font-size:10.9px;transform:scaleX(1.0374);transform-origin:0 0;color:#111;">Prévision</div>
<div class="a" style="left:172.21px;top:641px;font-size:10.9px;transform:scaleX(1.0456);transform-origin:100% 0;color:#111;word-spacing:0.5px;">33 653 557,15</div>
<div class="a" style="left:275.01px;top:641px;font-size:10.9px;transform:scaleX(1.0456);transform-origin:100% 0;color:#111;word-spacing:0.5px;">23 081 757,15</div>
<div class="a" style="left:370.11px;top:641px;font-size:10.9px;transform:scaleX(1.0456);transform-origin:100% 0;color:#111;word-spacing:0.5px;">10 530 537,50</div>
<div class="a" style="left:467.39px;top:641px;font-size:10.9px;transform:scaleX(1.0828);transform-origin:100% 0;color:#111;word-spacing:0.5px;">8 111 133,10</div>
<div class="a" style="left:554.87px;top:641px;font-size:10.9px;transform:scaleX(1.0557);transform-origin:100% 0;color:#111;word-spacing:0.5px;">1 639 383,20</div>
<div class="a" style="left:651.67px;top:641px;font-size:10.9px;transform:scaleX(1.0557);transform-origin:100% 0;color:#111;word-spacing:0.5px;">4 350 263,20</div>
<div class="a" style="left:746.17px;top:641px;font-size:10.9px;transform:scaleX(1.0557);transform-origin:100% 0;color:#111;word-spacing:0.5px;">3 564 757,15</div>
<div class="a" style="left:838.57px;top:641px;font-size:10.9px;transform:scaleX(1.0557);transform-origin:100% 0;color:#111;word-spacing:0.5px;">5 322 369,20</div>
<div class="a" style="left:63.9px;top:658px;font-size:10.9px;transform:scaleX(1.0309);transform-origin:0 0;color:#111;font-weight:bold;-webkit-text-stroke:0.12px;">Total</div>
<div class="a" style="left:166.15px;top:658px;font-size:10.9px;transform:scaleX(1.0984);transform-origin:100% 0;color:#111;font-weight:bold;-webkit-text-stroke:0.12px;word-spacing:0.5px;">273 081 757,15</div>
<div class="a" style="left:268.95px;top:658px;font-size:10.9px;transform:scaleX(1.0984);transform-origin:100% 0;color:#111;font-weight:bold;-webkit-text-stroke:0.12px;word-spacing:0.5px;">173 081 757,15</div>
<div class="a" style="left:370.11px;top:658px;font-size:10.9px;transform:scaleX(1.1074);transform-origin:100% 0;color:#111;font-weight:bold;-webkit-text-stroke:0.12px;word-spacing:0.5px;">83 681 757,15</div>
<div class="a" style="left:459.71px;top:658px;font-size:10.9px;transform:scaleX(1.1074);transform-origin:100% 0;color:#111;font-weight:bold;-webkit-text-stroke:0.12px;word-spacing:0.5px;">35 558 557,15</div>
<div class="a" style="left:548.81px;top:658px;font-size:10.9px;transform:scaleX(1.1074);transform-origin:100% 0;color:#111;font-weight:bold;-webkit-text-stroke:0.12px;word-spacing:0.5px;">23 168 273,69</div>
<div class="a" style="left:645.61px;top:658px;font-size:10.9px;transform:scaleX(1.1074);transform-origin:100% 0;color:#111;font-weight:bold;-webkit-text-stroke:0.12px;word-spacing:0.5px;">29 458 710,23</div>
<div class="a" style="left:740.11px;top:658px;font-size:10.9px;transform:scaleX(1.1074);transform-origin:100% 0;color:#111;font-weight:bold;-webkit-text-stroke:0.12px;word-spacing:0.5px;">35 630 899,15</div>
<div class="a" style="left:832.51px;top:658px;font-size:10.9px;transform:scaleX(1.1074);transform-origin:100% 0;color:#111;font-weight:bold;-webkit-text-stroke:0.12px;word-spacing:0.5px;">53 631 757,15</div>
<div class="a" style="left:59.4px;top:674.2px;width:707.6px;height:6px;background:#c9c9c9;"></div>
<div class="a" style="left:437.2px;top:703px;font-size:32.5px;transform:scaleX(0.8934);transform-origin:0 0;color:#c4282d;">Canevas</div>
<svg style="left:38px;top:730px" width="30" height="10" viewBox="0 0 30 10"><path d="M6.500 1L2 5L6.500 9z M20.500 1L25 5L20.500 9z" fill="#bdbcb9"/></svg>
<div class="a" style="left:69px;top:721px;width:62.6px;height:29px;background:#ffffff;"></div>
<div class="a" style="left:69px;top:747.2px;width:62.6px;height:2.8px;background:#1c6b52;"></div>
<div class="a" style="left:84.5px;top:731px;font-size:11.5px;transform:scaleX(0.8779);transform-origin:0 0;color:#111;text-shadow:0.3px 0 0 #111;">Page 1</div>
<div class="a" style="left:133px;top:721.4px;width:32.3px;height:27.4px;background:#116a50;"></div>
<svg style="left:143.500px;top:729.500px" width="11" height="11" viewBox="0 0 11 11" stroke="#fff" stroke-width="1.700" fill="none"><path d="M5.500 0.500V10.500M0.500 5.500H10.500"/></svg>
<div class="a" style="left:0px;top:750px;width:1408px;height:18px;background:#efeeea;"></div>
<div class="a" style="left:0px;top:750px;width:1408px;height:1px;background:#dddcd9;"></div>
<div class="a" style="left:6px;top:755px;font-size:10.5px;transform:scaleX(0.8269);transform-origin:0 0;color:#2a2a2a;">Page 3 ɔage 1</div>
<!-- left rail icons -->
<svg style="left:0;top:133px" width="34" height="100" viewBox="0 133 34 100" fill="none" stroke="#2b2b2b" stroke-width="1.100" stroke-linejoin="round">
<path d="M11.400 156.400V146.200H14V156.400M14 156.400V150H16.600V156.400M16.600 156.400V152.500H19.200V156.400M19.200 156.400V149H21.500V156.400M21.500 156.400V146.200H23.800V156.400M10.900 156.500H24.300"/>
<rect x="11.400" y="179.700" width="12.300" height="11.500"/>
<path d="M11.400 183.500H23.700M11.400 187.300H23.700M15.500 179.700V191.200M19.600 179.700V191.200"/>
<path d="M17.800 212.600H24.400V217H17.800zM17.800 217H24.400V221.400H17.800zM17.800 222H24.400V226.300H17.800zM10.900 216.500H15.500V220.800H10.900zM13 216.500V213.800H15.800M13 220.800V223.500H16M15.500 218.600H17.800" stroke-width="1"/>
</svg>
<!-- panes -->
<div class="a" style="left:938.5px;top:134.5px;width:167.3px;height:586.5px;background:#ffffff;"></div>
<div class="a" style="left:938px;top:134.5px;width:1px;height:586.5px;background:#cfcecb;"></div>
<div class="a" style="left:938.5px;top:721px;width:167.3px;height:29px;background:#ecebe8;"></div>
<svg style="left:947.500px;top:144.800px" width="14" height="13" viewBox="0 0 14 13" fill="none" stroke="#222" stroke-width="1.150" stroke-linejoin="round"><path d="M0.700 0.700H13.300L8.300 6.800V12.200L5.700 10.600V6.800z"/></svg>
<div class="a" style="left:968px;top:145px;font-size:14.5px;transform:scaleX(0.8618);transform-origin:0 0;color:#151515;font-weight:bold;-webkit-text-stroke:0.12px;">Filtres</div>
<svg style="left:1061.500px;top:147px" width="13" height="9" viewBox="0 0 13 9" fill="none" stroke="#333" stroke-width="1"><path d="M0.700 5.200C3 -0.500 10 -0.500 12.300 5.200"/><circle cx="6.500" cy="5.800" r="1.900"/></svg>
<svg style="left:1087.3px;top:145.800px" width="12" height="11.500" viewBox="0 0 12 11.500" fill="none" stroke="#222" stroke-width="1.200"><path d="M0.800 0.800L5.600 5.750L0.800 10.700M6 0.800L10.800 5.750L6 10.700"/></svg>
<div class="a" style="left:945.800px;top:173.900px;width:147.700px;height:22.600px;border:1px solid #c6c4c1;border-radius:2px;background:#fff"></div>
<svg style="left:954.3px;top:179.5px" width="13" height="13" viewBox="0 0 13 13" fill="none" stroke="#222" stroke-width="1.150"><circle cx="7.800" cy="5" r="3.700"/><path d="M5.100 7.700L0.900 11.900"/></svg>
<div class="a" style="left:973.9px;top:180px;font-size:12px;transform:scaleX(0.9464);transform-origin:0 0;color:#1c1c1c;">Rechercher</div>
<div class="a" style="left:938.5px;top:202.4px;width:167.3px;height:1px;background:#dedddb;"></div>
<div class="a" style="left:946.5px;top:218px;font-size:11px;transform:scaleX(0.9619);transform-origin:0 0;color:#1c1c1c;">Filtres sur cette page</div>
<svg style="left:1085.5px;top:222.7px" width="11" height="3" viewBox="0 0 11 3" fill="#555"><circle cx="1.200" cy="1.500" r="0.950"/><circle cx="5.500" cy="1.500" r="0.950"/><circle cx="9.800" cy="1.500" r="0.950"/></svg>
<div class="a" style="left:945.800px;top:236.500px;width:152.600px;height:40.100px;border:1px solid #d3d1ce;border-radius:2px;background:#fff"></div>
<div class="a" style="left:968px;top:247px;font-size:11.3px;transform:scaleX(0.9484);transform-origin:0 0;color:#1c1c1c;">Ajouter des champs de</div>
<div class="a" style="left:995.7px;top:260px;font-size:11.3px;transform:scaleX(0.9412);transform-origin:0 0;color:#1c1c1c;">données ici</div>
<div class="a" style="left:946.5px;top:302px;font-size:11px;transform:scaleX(0.9578);transform-origin:0 0;color:#1c1c1c;">Filtres sur toutes les pages</div>
<svg style="left:1085.5px;top:306.8px" width="11" height="3" viewBox="0 0 11 3" fill="#555"><circle cx="1.200" cy="1.500" r="0.950"/><circle cx="5.500" cy="1.500" r="0.950"/><circle cx="9.800" cy="1.500" r="0.950"/></svg>
<div class="a" style="left:945.800px;top:320.500px;width:152.600px;height:40.500px;border:1px solid #d3d1ce;border-radius:2px;background:#fff"></div>
<div class="a" style="left:968px;top:330px;font-size:11.3px;transform:scaleX(0.9484);transform-origin:0 0;color:#1c1c1c;">Ajouter des champs de</div>
<div class="a" style="left:995.7px;top:343px;font-size:11.3px;transform:scaleX(0.9412);transform-origin:0 0;color:#1c1c1c;">données ici</div>
<div class="a" style="left:1105.8px;top:134.5px;width:302.2px;height:615.5px;background:#efeeea;"></div>
<div class="a" style="left:1105.3px;top:134.5px;width:1px;height:615.5px;background:#dcdbd7;"></div>
<div class="a" style="left:1259.3px;top:134.5px;width:1px;height:615.5px;background:#e0dfdb;"></div>
<div class="a" style="left:1113.8px;top:145px;font-size:14.5px;transform:scaleX(0.9627);transform-origin:0 0;color:#151515;-webkit-text-stroke:0.6px #151515;">Visualisations</div>
<svg style="left:1241.5px;top:145.800px" width="12" height="11.500" viewBox="0 0 12 11.500" fill="none" stroke="#222" stroke-width="1.200"><path d="M0.800 0.800L5.600 5.750L0.800 10.700M6 0.800L10.800 5.750L6 10.700"/></svg>
<div class="a" style="left:1113.8px;top:169px;font-size:10.8px;transform:scaleX(0.9241);transform-origin:0 0;color:#151515;font-weight:bold;-webkit-text-stroke:0.12px;">Créer un visuel</div>
<div class="a" style="left:1114.4px;top:185.5px;width:26.5px;height:26.5px;background:#c9c8c5;border-radius:1.500px;"></div>
<svg style="left:1117px;top:188px" width="22" height="22" viewBox="1117 188 22 22"><path d="M1117.500 189.700H1134" stroke="#1a1a1a" stroke-width="1.200"/><rect x="1117.500" y="193.300" width="20" height="15.600" fill="#0f7a44"/><path d="M1117.500 200.700H1137.500" stroke="#d6e9dd" stroke-width="1.300"/><path d="M1117.500 196.800H1137.500M1117.500 204.900H1137.500M1122.500 193.300V208.900M1127.500 193.300V208.900M1132.500 193.300V208.900" stroke="#0a5a31" stroke-width="0.700"/></svg>
<svg style="left:1173px;top:188px" width="23" height="23" viewBox="1173 188 23 23" fill="none" stroke="#161616" stroke-width="1.350" stroke-linejoin="round" stroke-linecap="round"><path d="M1180.300 202.200V189.500H1186.100V194.900L1192.200 194.400L1193.700 196.600L1184.800 207.800H1179.300L1178.600 206.900"/><path d="M1191.200 195.800L1180.400 206.200Q1179.200 207.300 1178.600 206.900" stroke-width="1.100"/><path d="M1180.300 198.100H1175V206.200H1177.400"/></svg>
<svg style="left:1227px;top:186px" width="24" height="25" viewBox="1227 186 24 25" fill="none" stroke="#161616" stroke-width="1.500" stroke-linecap="round"><circle cx="1237.800" cy="196.400" r="8.300"/><path d="M1243.600 202.300L1248.700 208.500" stroke-width="2"/><path d="M1230.500 196.300Q1234.500 194.800 1238.500 195.900L1244 190.900" stroke-width="1.200"/><path d="M1232.600 197.500V202.500M1234.800 197V204.300M1237.200 197V205M1239.500 197.500V204.500M1241.500 198.500V202.500" stroke-width="1.300"/></svg>
<div class="a" style="left:1106px;top:221.8px;width:153.3px;height:1px;background:#c2c1be;"></div>
<svg style="left:1121px;top:215.500px" width="14" height="8" viewBox="0 0 14 8"><path d="M0.500 7L7 0.800L13.500 7" fill="#efeeea" stroke="#a9a8a5" stroke-width="1"/><path d="M1.200 7.300H12.800" stroke="#efeeea" stroke-width="1.400"/></svg>
<svg style="left:1114.8px;top:231.3px" width="16" height="16" viewBox="0 0 16 16" fill="none" stroke-linejoin="round"><rect x="1" y="1.5" width="7.5" height="3" fill="#2f8fd0" stroke="#252525" stroke-width="0.950"/><rect x="1" y="5.6" width="10" height="3.2" fill="#f6f6f4" stroke="#252525" stroke-width="0.950"/><rect x="1" y="9.9" width="12.8" height="3" fill="#f6f6f4" stroke="#252525" stroke-width="0.950"/><path d="M2 11.400H12" stroke="#2f8fd0" stroke-width="1"/><path d="M1 0.800V14.600H15.300" stroke="#252525" stroke-width="1.100"/></svg>
<svg style="left:1138.6px;top:231.3px" width="16" height="16" viewBox="0 0 16 16" fill="none" stroke-linejoin="round"><rect x="3.2" y="6.5" width="2.6" height="8" fill="#f6f6f4" stroke="#252525" stroke-width="0.950"/><rect x="7" y="2" width="3" height="12.5" fill="#2f8fd0" stroke="#252525" stroke-width="0.950"/><rect x="11.3" y="2" width="3" height="12.5" fill="#2f8fd0" stroke="#252525" stroke-width="0.950"/><path d="M8.500 5V14M12.800 5V14" stroke="#f6f6f4" stroke-width="0.800"/><path d="M1 0.800V14.600H15.300" stroke="#252525" stroke-width="1.100"/></svg>
<svg style="left:1162.6px;top:231.3px" width="16" height="16" viewBox="0 0 16 16" fill="none" stroke-linejoin="round"><rect x="1" y="1.2" width="13.8" height="3" fill="#2f8fd0" stroke="#252525" stroke-width="0.950"/><rect x="1" y="5.6" width="7.5" height="3" fill="#f6f6f4" stroke="#252525" stroke-width="0.950"/><rect x="1" y="9.9" width="11" height="3" fill="#f6f6f4" stroke="#252525" stroke-width="0.950"/><path d="M2 11.400H10.500" stroke="#2f8fd0" stroke-width="1"/><path d="M1 0.800V14.600H15.300" stroke="#252525" stroke-width="1.100"/></svg>
<svg style="left:1186.8px;top:231.3px" width="16" height="16" viewBox="0 0 16 16" fill="none" stroke-linejoin="round"><rect x="1.2" y="1.2" width="3.6" height="13.4" fill="#2f8fd0" stroke="#252525" stroke-width="0.950"/><rect x="4.8" y="3.2" width="3" height="11.4" fill="#2f8fd0" stroke="#252525" stroke-width="0.950"/><rect x="8.8" y="6.5" width="2.8" height="8.1" fill="#f6f6f4" stroke="#252525" stroke-width="0.950"/><rect x="12" y="4.5" width="2.8" height="10.1" fill="#f6f6f4" stroke="#252525" stroke-width="0.950"/><path d="M0.500 14.700H15.500" stroke="#252525" stroke-width="1.100"/></svg>
<svg style="left:1210.9px;top:231.3px" width="16" height="16" viewBox="0 0 16 16" fill="none" stroke-linejoin="round"><rect x="1" y="1.2" width="13.6" height="2.9" fill="#2f8fd0" stroke="#252525" stroke-width="0.950"/><rect x="1" y="5.7" width="13.6" height="2.9" fill="#2f8fd0" stroke="#252525" stroke-width="0.950"/><rect x="1" y="10.2" width="13.6" height="2.9" fill="#2f8fd0" stroke="#252525" stroke-width="0.950"/><path d="M1 0.800V14.600H15.300" stroke="#252525" stroke-width="1.100"/></svg>
<svg style="left:1235px;top:231.3px" width="16" height="16" viewBox="0 0 16 16" fill="none" stroke-linejoin="round"><rect x="2.2" y="1.5" width="3" height="13.1" fill="#2f8fd0" stroke="#252525" stroke-width="0.950"/><rect x="6.6" y="1.5" width="3" height="13.1" fill="#f6f6f4" stroke="#252525" stroke-width="0.950"/><rect x="11.2" y="1.5" width="3.2" height="13.1" fill="#2f8fd0" stroke="#252525" stroke-width="0.950"/><path d="M8.100 3V13" stroke="#2f8fd0" stroke-width="0.900"/><path d="M12.800 5.500V14" stroke="#f6f6f4" stroke-width="0.900"/><path d="M1 0.800V14.600H15.300" stroke="#252525" stroke-width="1.100"/></svg>
<svg style="left:1114.8px;top:252.8px" width="16" height="16" viewBox="0 0 16 16" fill="none" stroke-linejoin="round"><path d="M1 0.800V14.600H15.300" stroke="#252525" stroke-width="1.100"/><path d="M1.500 10.500L5.500 4.500L7 6" stroke="#252525" stroke-width="1.050"/><path d="M1.500 12.500L8 5.500" stroke="#252525" stroke-width="0.900"/><circle cx="9.300" cy="5" r="1.500" stroke="#252525" stroke-width="0.900"/><path d="M12 3.800H14.300M12 6.300H14.300" stroke="#252525" stroke-width="1"/></svg>
<svg style="left:1138.6px;top:252.8px" width="16" height="16" viewBox="0 0 16 16" fill="none" stroke-linejoin="round"><path d="M1 14.500L4.500 8.500L8 11L11.500 6.500L15.300 14.500z" fill="#2f8fd0" stroke="none"/><path d="M0.800 14.500C2.500 10 4.500 4 6 1.500C7.500 4 9 8.500 9.800 10.500" stroke="#252525" stroke-width="1.050" fill="none"/><path d="M8 6.500C9.500 3.500 10.500 2 11.500 1.500C13 4 14.500 10 15.300 14.500H0.800" stroke="#252525" stroke-width="1.050" fill="none"/></svg>
<svg style="left:1162.6px;top:252.8px" width="16" height="16" viewBox="0 0 16 16" fill="none" stroke-linejoin="round"><path d="M1.500 12V2.500L6 7.500L10.500 2.500L15 6.500V10.500L10.500 6.500L6 12z" fill="#2f8fd0" stroke="#1d5f8f" stroke-width="0.600"/><path d="M1.500 5.500L6 10L10.500 4.500L15 8.500" stroke="#f6f6f4" stroke-width="0.900" fill="none"/><path d="M1 0.800V14.600H15.300" stroke="#252525" stroke-width="1.100"/></svg>
<svg style="left:1186.8px;top:252.8px" width="16" height="16" viewBox="0 0 16 16" fill="none" stroke-linejoin="round"><rect x="1.5" y="1.5" width="3.2" height="13.1" fill="#2f8fd0" stroke="#252525" stroke-width="0.950"/><rect x="5.2" y="1.5" width="2.8" height="13.1" fill="#f6f6f4" stroke="#252525" stroke-width="0.950"/><rect x="9" y="4" width="2.6" height="10.6" fill="#f6f6f4" stroke="#252525" stroke-width="0.950"/><rect x="12.2" y="2" width="2.6" height="12.6" fill="#f6f6f4" stroke="#252525" stroke-width="0.950"/><path d="M9 9.500H15M10.300 6V13" stroke="#252525" stroke-width="0.900"/><path d="M0.500 14.700H15.500" stroke="#252525" stroke-width="1.100"/></svg>
<svg style="left:1210.9px;top:252.8px" width="16" height="16" viewBox="0 0 16 16" fill="none" stroke-linejoin="round"><rect x="3.6" y="8" width="2.2" height="6.6" fill="#f6f6f4" stroke="#252525" stroke-width="0.950"/><rect x="6.8" y="3" width="2.6" height="11.6" fill="#f6f6f4" stroke="#252525" stroke-width="0.950"/><rect x="10" y="6.5" width="2.2" height="8.1" fill="#2f8fd0" stroke="#252525" stroke-width="0.950"/><path d="M12.500 14V7L15 4" stroke="#252525" stroke-width="1"/><path d="M8.100 5V13" stroke="#2f8fd0" stroke-width="0.800"/><path d="M1 0.800V14.600H15.300" stroke="#252525" stroke-width="1.100"/></svg>
<svg style="left:1235px;top:252.8px" width="16" height="16" viewBox="0 0 16 16" fill="none" stroke-linejoin="round"><path d="M2 4C3.500 9 6 10 8.500 8.500S13 4.500 15 3.500V12.500H2z" fill="#2f8fd0" stroke="#1d5f8f" stroke-width="0.700"/><path d="M3.500 8C5 11.500 8 11.500 10 10L13 7.500L15 6.500V12.500H3.500z" fill="#7c9a8a" stroke="none" opacity="0.700"/><path d="M10 12.500V10L12.500 10.500L15 8V12.500z" fill="#e0b24c" stroke="none"/><path d="M1 0.800V14.600H15.300" stroke="#252525" stroke-width="1.100"/></svg>
<svg style="left:1114.8px;top:274.5px" width="16" height="16" viewBox="0 0 16 16" fill="none" stroke-linejoin="round"><path d="M1 1V14.500H15.500" stroke="#252525" stroke-width="1.100"/><path d="M3.500 14.500V6H6.500V9.500H9.500V3H13.500V14.500" fill="#fafafa" stroke="#252525" stroke-width="1"/><path d="M6.500 9.500V14.500M9.500 9.500V14.500" stroke="#252525" stroke-width="0.900"/></svg>
<svg style="left:1138.6px;top:274.5px" width="16" height="16" viewBox="0 0 16 16" fill="none" stroke-linejoin="round"><rect x="0.500" y="1.500" width="15" height="3" fill="#2f8fd0"/><rect x="2.500" y="5.500" width="11" height="2.800" fill="#2f8fd0"/><rect x="4.500" y="9.300" width="7" height="2.600" fill="#2f8fd0"/><rect x="5.800" y="12.800" width="4.400" height="2.200" fill="#2f8fd0"/></svg>
<svg style="left:1162.6px;top:274.5px" width="16" height="16" viewBox="0 0 16 16" fill="none" stroke-linejoin="round"><path d="M1 1V14.500H15.500" stroke="#252525" stroke-width="1.100"/><circle cx="12.500" cy="3" r="1.300" fill="#252525"/><path d="M4 11L5.500 8L8 10.500L10.500 6.500" stroke="#2f8fd0" stroke-width="0.900" stroke-dasharray="1.500 1"/><circle cx="5" cy="9.500" r="0.900" fill="#2f8fd0"/><circle cx="9.500" cy="8" r="0.900" fill="#2f8fd0"/></svg>
<svg style="left:1186.8px;top:274.5px" width="16" height="16" viewBox="0 0 16 16" fill="none" stroke-linejoin="round"><circle cx="8" cy="8" r="6.800" fill="#fafafa" stroke="#252525" stroke-width="1.100"/><path d="M8 8V1.200A6.800 6.800 0 0 1 13.800 11.500z" fill="#2f8fd0" stroke="#252525" stroke-width="0.800"/></svg>
<svg style="left:1210.9px;top:274.5px" width="16" height="16" viewBox="0 0 16 16" fill="none" stroke-linejoin="round"><circle cx="8" cy="8" r="5.600" stroke="#2f8fd0" stroke-width="2.900"/><circle cx="8" cy="8" r="7.100" stroke="#252525" stroke-width="0.800"/><circle cx="8" cy="8" r="4.100" stroke="#252525" stroke-width="0.800" fill="#f4f4f2"/></svg>
<svg style="left:1235px;top:274.5px" width="16" height="16" viewBox="0 0 16 16" fill="none" stroke-linejoin="round"><rect x="1" y="1.500" width="14" height="13" fill="#fafafa" stroke="#252525" stroke-width="1"/><rect x="1.500" y="2" width="6.500" height="12" fill="#2f8fd0"/><rect x="8.500" y="2" width="6" height="4" fill="#2f8fd0"/><path d="M8.300 1.500V14.500M8.300 6.300H15M11.500 6.300V14.500M1 8H8.300" stroke="#252525" stroke-width="0.800"/></svg>
<svg style="left:1114.8px;top:296.5px" width="16" height="16" viewBox="0 0 16 16" fill="none" stroke-linejoin="round"><circle cx="8" cy="6.800" r="5.800" fill="#6fbf8b" stroke="#1d5b3a" stroke-width="1.200"/><path d="M5 5.500C7 3.500 10 4 10.500 6.500S8 10 6 9.500" stroke="#e9f6ee" stroke-width="1.100"/><path d="M3.500 14.800H12.500M8 12.600V14.800" stroke="#252525" stroke-width="1.200"/></svg>
<svg style="left:1138.6px;top:296.5px" width="16" height="16" viewBox="0 0 16 16" fill="none" stroke-linejoin="round"><path d="M1 2L4.500 3.500L8 2L11.500 3.500L15 2V9C15 12 12 14.500 8 15C4 14.500 1 12 1 9z" fill="#2f8fd0" stroke="#1d5f8f" stroke-width="0.800"/><path d="M8 5L11.500 7.500L9 11L5.500 9z" fill="#cfe4f3" stroke="none"/></svg>
<svg style="left:1162.6px;top:296.5px" width="16" height="16" viewBox="0 0 16 16" fill="none" stroke-linejoin="round"><path d="M11.500 0.800L13.800 15L8.500 10.500L1.500 13.500z" fill="#2f8fd0" stroke="none"/></svg>
<svg style="left:1186.8px;top:296.5px" width="16" height="16" viewBox="0 0 16 16" fill="none" stroke-linejoin="round"><path d="M1.200 12.500A6.800 6.800 0 0 1 14.800 12.500" stroke="#252525" stroke-width="1.200"/><path d="M3.800 12.500A4.200 4.200 0 0 1 12.200 12.500" stroke="#2f8fd0" stroke-width="2"/><path d="M6.300 12.500A1.700 1.700 0 0 1 9.700 12.500" stroke="#252525" stroke-width="1.100"/></svg>
<svg style="left:1210.9px;top:296.5px" width="16" height="16" viewBox="0 0 16 16" fill="none" stroke-linejoin="round"><rect x="1" y="2" width="14" height="12" fill="#fafafa" stroke="#252525" stroke-width="1.100"/><rect x="3.800" y="4.800" width="8.400" height="6.400" fill="#e4eef6" stroke="#8a8a8a" stroke-width="0.800"/><path d="M6 7H10" stroke="#2f8fd0" stroke-width="1"/></svg>
<svg style="left:1235px;top:296.5px" width="16" height="16" viewBox="0 0 16 16" fill="none" stroke-linejoin="round"><rect x="1" y="1.500" width="14" height="13" fill="#fafafa" stroke="#252525" stroke-width="1.100"/><path d="M3.500 5.500H12.500" stroke="#e0704a" stroke-width="1.300"/><path d="M10.500 3.500L12.500 5.500" stroke="#e0704a" stroke-width="1"/><path d="M3.500 9.500H12.500" stroke="#2f8fd0" stroke-width="1.600"/></svg>
<svg style="left:1114.8px;top:318.4px" width="16" height="16" viewBox="0 0 16 16" fill="none" stroke-linejoin="round"><rect x="1" y="1" width="13.500" height="12.500" fill="#fafafa" stroke="#252525" stroke-width="1.100"/><path d="M1 4.200H14.500" stroke="#252525" stroke-width="0.800"/><path d="M4 7H10V10H7.500 M4 5.500V11.500" stroke="#252525" stroke-width="0.800"/><path d="M10.500 10.500H15V13L12.500 15.500V13H10.500z" fill="#fafafa" stroke="#252525" stroke-width="0.900"/></svg>
<svg style="left:1138.6px;top:318.4px" width="16" height="16" viewBox="0 0 16 16" fill="none" stroke-linejoin="round"><rect x="1" y="1.200" width="14" height="13.600" fill="#fafafa" stroke="#252525" stroke-width="1.100"/><path d="M1 4.500H15M1 8H15M1 11.400H15M5.700 1.200V14.800M10.400 1.200V14.800" stroke="#252525" stroke-width="0.800"/></svg>
<svg style="left:1162.6px;top:318.4px" width="16" height="16" viewBox="0 0 16 16" fill="none" stroke-linejoin="round"><rect x="1" y="1.200" width="14" height="13.600" fill="#2f8fd0" stroke="#1d5f8f" stroke-width="1"/><rect x="1.500" y="1.700" width="13" height="2.500" fill="#1d5f8f"/><path d="M1 8H15M1 11.400H15M5.700 4.500V14.800M10.400 4.500V14.800" stroke="#cfe4f3" stroke-width="0.800"/><path d="M1 4.500H15" stroke="#1d5f8f" stroke-width="0.800"/></svg>
<div class="a" style="left:1189.56px;top:320px;font-size:14.5px;transform:scaleX(0.8595);transform-origin:50% 0;color:#2f8fd0;font-weight:bold;-webkit-text-stroke:0.12px;">R</div>
<div class="a" style="left:1209.73px;top:318px;font-size:14.5px;transform:scaleX(0.8739);transform-origin:50% 0;color:#2f8fd0;font-weight:bold;-webkit-text-stroke:0.12px;">Py</div>
<svg style="left:1235px;top:318.4px" width="16" height="16" viewBox="0 0 16 16" fill="none" stroke-linejoin="round"><path d="M1.200 1V14.800H15.500" stroke="#252525" stroke-width="1.100"/><path d="M1.200 5.500H8L12 3.500" stroke="#252525" stroke-width="0.900"/><rect x="1.500" y="6.800" width="7" height="2.200" fill="#fafafa" stroke="#252525" stroke-width="0.700"/><circle cx="13" cy="3" r="1.500" fill="#2f8fd0" stroke="#1d5f8f" stroke-width="0.600"/><path d="M4.500 11.500H7V10" stroke="#2f8fd0" stroke-width="0.900"/></svg>
<svg style="left:1114.8px;top:340px" width="16" height="16" viewBox="0 0 16 16" fill="none" stroke-linejoin="round"><rect x="0.500" y="6.300" width="6" height="3.200" fill="#2f8fd0"/><rect x="8.500" y="1" width="7" height="14" fill="#2f8fd0" stroke="#1d6ea6" stroke-width="0.600"/><path d="M8.500 3.800H15.500M8.500 6.600H15.500M8.500 9.400H15.500M8.500 12.200H15.500M12 1V15" stroke="#1d6ea6" stroke-width="0.600"/></svg>
<svg style="left:1138.6px;top:340px" width="16" height="16" viewBox="0 0 16 16" fill="none" stroke-linejoin="round"><path d="M1 1.500H15V11H6.500L3.800 14V11H1z" fill="#f7f7f5" stroke="#276f9f" stroke-width="1.200"/></svg>
<svg style="left:1162.6px;top:340px" width="16" height="16" viewBox="0 0 16 16" fill="none" stroke-linejoin="round"><path d="M3.500 15V1H10L14 5V15z" fill="#fafafa" stroke="#252525" stroke-width="1.100"/><path d="M10 1V5H14" stroke="#252525" stroke-width="0.900"/><path d="M1 8H8" stroke="#252525" stroke-width="1"/><path d="M6 10H9" stroke="#2f8fd0" stroke-width="0.900"/></svg>
<svg style="left:1186.8px;top:340px" width="16" height="16" viewBox="0 0 16 16" fill="none" stroke-linejoin="round"><path d="M2.500 15V1H9.500L13.500 5V15z" fill="#fafafa" stroke="#252525" stroke-width="1.100"/><path d="M9.500 1V5H13.500" stroke="#252525" stroke-width="0.900"/><rect x="3.800" y="10" width="8.400" height="3.600" fill="#252525"/></svg>
<svg style="left:1210.9px;top:340px" width="16" height="16" viewBox="0 0 16 16" fill="none" stroke-linejoin="round"><rect x="0.500" y="0.500" width="15" height="15" fill="#2f86c2"/><rect x="0.500" y="0.500" width="5" height="5.500" fill="#e8662c"/><rect x="11.500" y="9.500" width="4" height="6" fill="#e8662c"/><path d="M3.500 8.500L6.500 12.500L12.500 2.500" stroke="#f2f2f2" stroke-width="2"/><circle cx="3" cy="3.200" r="0.900" fill="#fff"/><circle cx="13.500" cy="12.500" r="0.900" fill="#fff"/></svg>
<svg style="left:1235px;top:340px" width="16" height="16" viewBox="0 0 16 16" fill="none" stroke-linejoin="round"><circle cx="8" cy="8" r="5.800" fill="#f7f7f5" stroke="#252525" stroke-width="1.100"/><circle cx="8.800" cy="9" r="2.300" stroke="#252525" stroke-width="0.900"/><g fill="#252525"><circle cx="8" cy="1.800" r="1"/><circle cx="8" cy="14.200" r="1"/><circle cx="1.800" cy="8" r="1"/><circle cx="14.200" cy="8" r="1"/></g><path d="M9 8.500V10H10.500" stroke="#252525" stroke-width="0.700"/></svg>
<svg style="left:1114.8px;top:362.1px" width="16" height="16" viewBox="0 0 16 16" fill="none" stroke-linejoin="round"><path d="M8 0.800L15.200 8L8 15.200L0.800 8z" fill="#f3e4f6" stroke="#8a3f9e" stroke-width="1.300"/><path d="M6.200 5.500V7.500M9.800 5.500V7.500M5.500 9.500C6.500 11.500 9.500 11.500 10.500 9.500" stroke="#8a3f9e" stroke-width="0.900"/></svg>
<svg style="left:1138.6px;top:362.1px" width="16" height="16" viewBox="0 0 16 16" fill="none" stroke-linejoin="round"><path d="M1 1.500H7.500L14.800 8L7.500 14.500H1L8.200 8z" fill="#dff0f7" stroke="#1f7597" stroke-width="1.200"/><path d="M5 11.500L9 8" stroke="#1f7597" stroke-width="1"/></svg>
<div class="a" style="left:1164.8px;top:363px;font-size:14px;transform:scaleX(0.9652);transform-origin:0 0;color:#333;">···</div>
<div class="a" style="left:1106px;top:385.2px;width:153.3px;height:1px;background:#dad9d6;"></div>
<div class="a" style="left:1117px;top:395px;font-size:11px;transform:scaleX(0.9402);transform-origin:0 0;color:#1c1c1c;">Valeurs</div>
<div class="a" style="left:1110.900px;top:411.800px;width:141.500px;height:23.300px;border:1px dashed #c3c1be;border-radius:2px;background:#fff"></div>
<div class="a" style="left:1120.5px;top:419px;font-size:11px;transform:scaleX(0.9767);transform-origin:0 0;color:#1c1c1c;">Ajouter des champs de d...</div>
<div class="a" style="left:1118px;top:450px;font-size:14px;transform:scaleX(1.0136);transform-origin:0 0;color:#151515;-webkit-text-stroke:0.6px #151515;">Extraction</div>
<div class="a" style="left:1106px;top:471.2px;width:153.3px;height:1px;background:#dad9d6;"></div>
<div class="a" style="left:1113.4px;top:483px;font-size:11px;transform:scaleX(0.9828);transform-origin:0 0;color:#1c1c1c;">Rapport croisé</div>
<div class="a" style="left:1226.600px;top:481px;width:26.300px;height:12.200px;border:1px solid #3a3a3a;border-radius:7.500px;background:#f7f6f4"></div>
<div class="a" style="left:1230.3px;top:484.8px;width:5.6px;height:5.6px;background:#3a3a3a;border-radius:50%;"></div>
<div class="a" style="left:1237.5px;top:487.3px;width:9px;height:0.9px;background:#8a8a8a;"></div>
<div class="a" style="left:1113.4px;top:509px;font-size:11px;transform:scaleX(0.9797);transform-origin:0 0;color:#1c1c1c;">Conserver tous les filtre</div>
<div class="a" style="left:1226.600px;top:507.300px;width:28.300px;height:14.200px;border-radius:7.500px;background:#0f6b4f"></div>
<div class="a" style="left:1243.2px;top:510.4px;width:8px;height:8px;background:#fff;border-radius:50%;"></div>
<svg style="left:1231.500px;top:511.800px" width="8" height="5" viewBox="0 0 8 5" fill="none" stroke="#fff" stroke-width="1.100"><path d="M0.600 1L3.200 3.800L7.400 0.800"/></svg>
<div class="a" style="left:1110.900px;top:529.100px;width:141.500px;height:36.900px;border:1px dashed #c3c1be;border-radius:2px;background:#fff"></div>
<div class="a" style="left:1120.5px;top:536px;font-size:11px;transform:scaleX(0.9875);transform-origin:0 0;color:#1c1c1c;">Ajouter des champs</div>
<div class="a" style="left:1120.5px;top:551px;font-size:11px;transform:scaleX(1.0051);transform-origin:0 0;color:#1c1c1c;">d'extraction ici</div>
<div class="a" style="left:1268.1px;top:145px;font-size:14.5px;transform:scaleX(0.9269);transform-origin:0 0;color:#151515;-webkit-text-stroke:0.6px #151515;">Données</div>
<svg style="left:1390px;top:145.800px" width="12" height="11.500" viewBox="0 0 12 11.500" fill="none" stroke="#222" stroke-width="1.200"><path d="M0.800 0.800L5.600 5.750L0.800 10.700M6 0.800L10.800 5.750L6 10.700"/></svg>
<div class="a" style="left:1265px;top:173px;width:137.500px;height:21.800px;border:1px solid #6a6a6a;box-shadow:0 0 0 0.600px #a5a5a5;border-radius:2.500px;background:#fff"></div>
<svg style="left:1272.2px;top:179px" width="13" height="13" viewBox="0 0 13 13" fill="none" stroke="#222" stroke-width="1.150"><circle cx="7.800" cy="5" r="3.700"/><path d="M5.100 7.700L0.900 11.900"/></svg>
<div class="a" style="left:1289.2px;top:180px;font-size:12px;transform:scaleX(0.9528);transform-origin:0 0;color:#1c1c1c;">Rechercher</div>
<svg style="left:1269.200px;top:209.9px" width="7" height="11" viewBox="0 0 7 11" fill="none" stroke="#333" stroke-width="1.100"><path d="M1 0.800L5.800 5.500L1 10.200"/></svg>
<svg style="left:1281.300px;top:209.7px" width="12" height="12" viewBox="0 0 12 12" fill="none" stroke="#2a2a2a"><rect x="0.600" y="0.600" width="10.800" height="10.800" stroke-width="1.100" fill="#f6f6f4"/><rect x="1" y="1" width="10" height="2.300" fill="#555" stroke="none"/><path d="M0.600 3.700H11.400M0.600 6.300H11.400M0.600 8.900H11.400M4.200 3.700V11.400M7.800 3.700V11.400" stroke-width="0.800"/></svg>
<div class="a" style="left:1298px;top:211px;font-size:11.5px;transform:scaleX(0.9438);transform-origin:0 0;color:#1c1c1c;">DimCompte</div>
<svg style="left:1269.200px;top:230.7px" width="7" height="11" viewBox="0 0 7 11" fill="none" stroke="#333" stroke-width="1.100"><path d="M1 0.800L5.800 5.500L1 10.200"/></svg>
<svg style="left:1281.300px;top:230.5px" width="12" height="12" viewBox="0 0 12 12" fill="none" stroke="#2a2a2a"><rect x="0.600" y="0.600" width="10.800" height="10.800" stroke-width="1.100" fill="#f6f6f4"/><rect x="1" y="1" width="10" height="2.300" fill="#555" stroke="none"/><path d="M0.600 3.700H11.400M0.600 6.300H11.400M0.600 8.900H11.400M4.200 3.700V11.400M7.800 3.700V11.400" stroke-width="0.800"/></svg>
<div class="a" style="left:1298px;top:231px;font-size:11.5px;transform:scaleX(0.9277);transform-origin:0 0;color:#1c1c1c;">DimDate</div>
<svg style="left:1269.200px;top:251.7px" width="7" height="11" viewBox="0 0 7 11" fill="none" stroke="#333" stroke-width="1.100"><path d="M1 0.800L5.800 5.500L1 10.200"/></svg>
<svg style="left:1281.300px;top:251.5px" width="12" height="12" viewBox="0 0 12 12" fill="none" stroke="#2a2a2a"><rect x="0.600" y="0.600" width="10.800" height="10.800" stroke-width="1.100" fill="#f6f6f4"/><rect x="1" y="1" width="10" height="2.300" fill="#555" stroke="none"/><path d="M0.600 3.700H11.400M0.600 6.300H11.400M0.600 8.900H11.400M4.200 3.700V11.400M7.800 3.700V11.400" stroke-width="0.800"/></svg>
<div class="a" style="left:1298px;top:252px;font-size:11.5px;transform:scaleX(0.9415);transform-origin:0 0;color:#1c1c1c;">DimCatégorieProduit</div>
<svg style="left:1269.200px;top:273.2px" width="7" height="11" viewBox="0 0 7 11" fill="none" stroke="#333" stroke-width="1.100"><path d="M1 0.800L5.800 5.500L1 10.200"/></svg>
<svg style="left:1281.300px;top:273px" width="12" height="12" viewBox="0 0 12 12" fill="none" stroke="#2a2a2a"><rect x="0.600" y="0.600" width="10.800" height="10.800" stroke-width="1.100" fill="#f6f6f4"/><rect x="1" y="1" width="10" height="2.300" fill="#555" stroke="none"/><path d="M0.600 3.700H11.400M0.600 6.300H11.400M0.600 8.900H11.400M4.200 3.700V11.400M7.800 3.700V11.400" stroke-width="0.800"/></svg>
<div class="a" style="left:1298px;top:274px;font-size:11.5px;transform:scaleX(0.9130);transform-origin:0 0;color:#1c1c1c;">DimScénario</div>
<svg style="left:1269.200px;top:294.3px" width="7" height="11" viewBox="0 0 7 11" fill="none" stroke="#333" stroke-width="1.100"><path d="M1 0.800L5.800 5.500L1 10.200"/></svg>
<svg style="left:1281.300px;top:294.1px" width="12" height="12" viewBox="0 0 12 12" fill="none" stroke="#2a2a2a"><rect x="0.600" y="0.600" width="10.800" height="10.800" stroke-width="1.100" fill="#f6f6f4"/><rect x="1" y="1" width="10" height="2.300" fill="#555" stroke="none"/><path d="M0.600 3.700H11.400M0.600 6.300H11.400M0.600 8.900H11.400M4.200 3.700V11.400M7.800 3.700V11.400" stroke-width="0.800"/></svg>
<div class="a" style="left:1298px;top:295px;font-size:11.5px;transform:scaleX(0.8959);transform-origin:0 0;color:#1c1c1c;">FactPlanStratégie</div>
</div>
</body>
</html>
